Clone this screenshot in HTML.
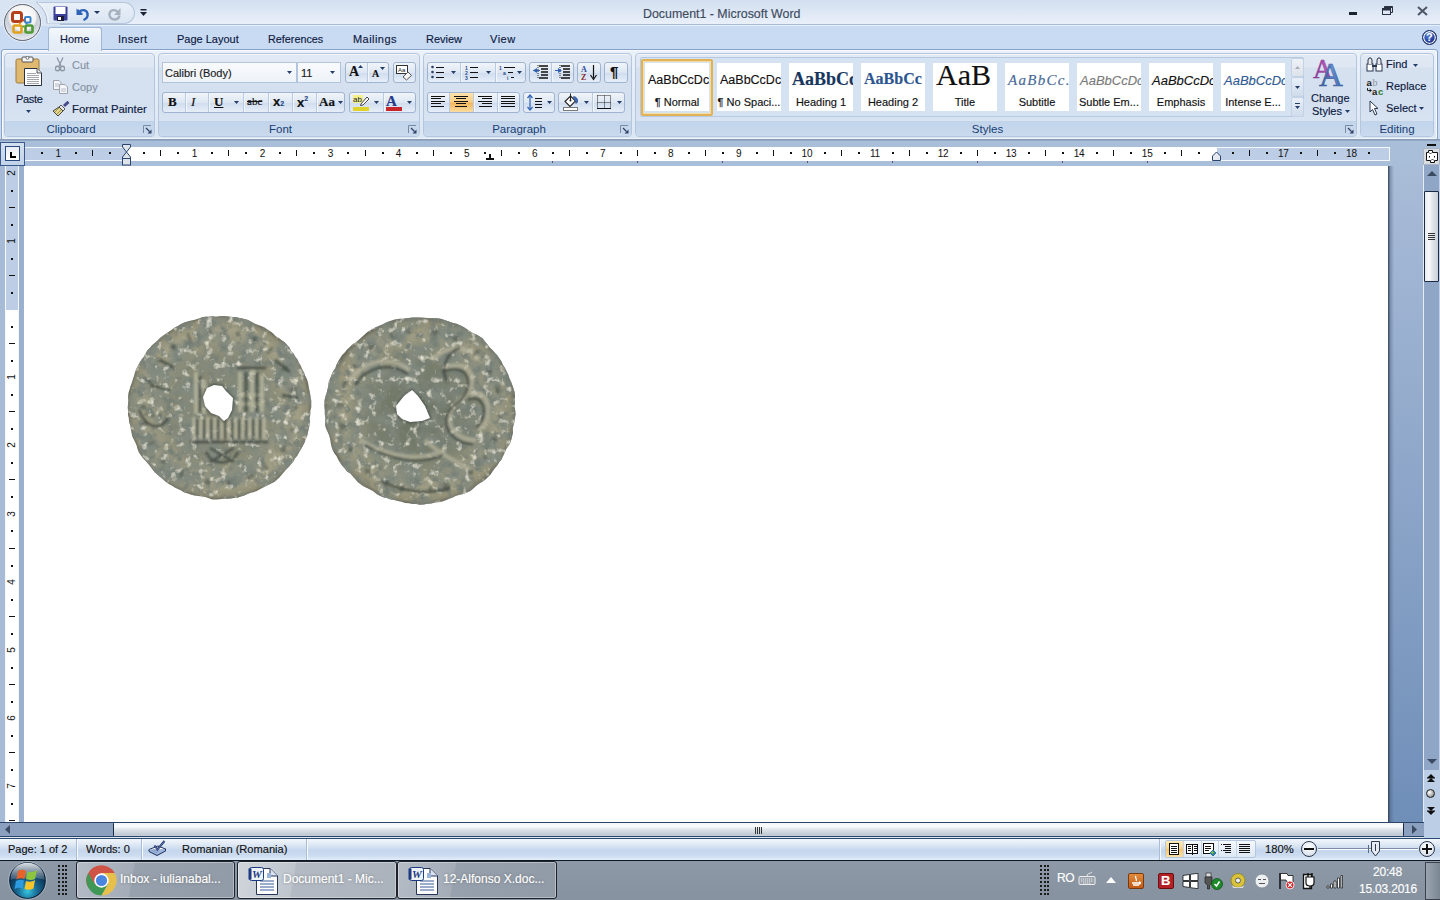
<!DOCTYPE html>
<html><head><meta charset="utf-8">
<style>
*{box-sizing:border-box}
html,body{margin:0;padding:0}
body{width:1440px;height:900px;position:relative;overflow:hidden;font-family:"Liberation Sans",sans-serif;background:#fff;color:#15428b}
.a{position:absolute}
.t{position:absolute;white-space:nowrap;line-height:1;-webkit-text-stroke:0.15px currentColor}
/* title bar */
#title{left:0;top:0;width:1440px;height:25px;background:linear-gradient(#d2dff0,#e9f0fa);border-bottom:1px solid #a7bcd6}
#tabs{left:0;top:25px;width:1440px;height:115px;background:#c9dbf2;border-top:1px solid #e8f1fb}
#ribbon{left:1px;top:49px;width:1437px;height:91px;background:linear-gradient(#eaf1f9,#dce7f4);border:1px solid #87a3c6;border-radius:3px 3px 2px 2px;box-shadow:inset 0 1px 0 #f6f9fd,inset 1px 0 0 #f6f9fd,inset -1px 0 0 #f6f9fd,inset 0 -1px 0 #eef4fb}
.grp{position:absolute;top:53px;height:84px;border:1px solid #b3c6de;border-radius:4px;background:linear-gradient(#e1e9f4 0%,#dee7f3 16%,#d5e1ef 17%,#d4e0ef 60%,#d8e4f2 82%);overflow:hidden;box-shadow:inset 0 1px 0 #f2f6fb}
.grp .lbl{position:absolute;left:0;right:0;bottom:0;height:15px;background:linear-gradient(#c2d4ea,#c9daee);text-align:center;font-size:11.5px;line-height:17px;color:#173d73;padding-right:17px}
.grp .lbl.nl{padding-right:0}
.launch{position:absolute;right:3px;bottom:3px;width:9px;height:9px}
#rulerrow{left:0;top:140px;width:1440px;height:26px;background:#a9bed9;border-top:1px solid #90a8c8}
#docarea{left:0;top:166px;width:1424px;height:656px;background:#a6bad7}
#page{left:24px;top:166px;width:1364px;height:656px;background:#fff}
#vscroll{left:1423px;top:165px;width:17px;height:657px;background:#c4d5ec}
#hscroll{left:0;top:822px;width:1424px;height:16px;background:#8aa0bf;border-top:1px solid #1f3a5f;border-bottom:1px solid #29466b}
#status{left:0;top:838px;width:1440px;height:23px;background:linear-gradient(#eef4fb 0%,#d6e3f3 35%,#c2d4eb 50%,#d3e2f3 85%,#e6f0fa 100%);border-top:1px solid #2b4a72;border-bottom:1px solid #0e1a2a}
#taskbar{left:0;top:861px;width:1440px;height:39px;background:#8894a2}
.btn{position:absolute;border:1px solid #9fb4d1;border-radius:3px;background:linear-gradient(#f1f5fa,#dde6f2 50%,#cfdcee 51%,#e6eef8)}
</style></head><body>
<div id="title" class="a"></div>
<div id="tabs" class="a"></div>
<div id="ribbon" class="a"></div>
<!--TOP-->
<!-- QAT pill -->
<div class="a" style="left:30px;top:2px;width:105px;height:22px;border:1px solid #b6c7dd;border-left:none;border-radius:0 11px 11px 0;background:linear-gradient(#eaf0f8,#dae5f2)"></div>
<svg class="a" style="left:0;top:0" width="60" height="26"><path d="M36 2.5A25 25 0 0 1 47 23.5H60V26H0V0H36Z" fill="#d9e4f2"/><path d="M36.5 2.5A25 25 0 0 1 47 23.5" fill="none" stroke="#a9b9cf" stroke-width="1"/><path d="M38 2.5A25 25 0 0 1 48.5 23" fill="none" stroke="#f4f8fc" stroke-width="1"/></svg>
<!-- Office button -->
<div class="a" style="left:4px;top:4px;width:37px;height:37px;border-radius:50%;background:radial-gradient(circle at 50% 35%,#ffffff 0%,#f3f3f3 45%,#c9ced6 52%,#e9edf2 80%,#b8bec7 100%);border:1px solid #5c6470;box-shadow:0 0 0 1px #e7edf5"></div>
<svg class="a" style="left:0px;top:0px" width="45" height="45" viewBox="0 0 45 45">
 <rect x="12.5" y="12.5" width="9" height="9" rx="2" fill="none" stroke="#b5401a" stroke-width="3"/>
 <rect x="25" y="17" width="5.5" height="5.5" rx="1" fill="none" stroke="#3d83c6" stroke-width="2"/>
 <rect x="13.5" y="25.5" width="8" height="7" rx="1.5" fill="none" stroke="#e3a21e" stroke-width="2.6"/>
 <rect x="25.5" y="25.5" width="7" height="7" rx="1.5" fill="none" stroke="#4d9a32" stroke-width="2.6"/>
 <circle cx="23.3" cy="20.2" r="1.2" fill="#c84a22"/><circle cx="20" cy="23.5" r="1.1" fill="#e0a020"/><circle cx="26.5" cy="23.5" r="1.1" fill="#3d83c6"/><circle cx="23.3" cy="26.5" r="1.1" fill="#5a9a30"/>
</svg>
<!-- save -->
<svg class="a" style="left:53px;top:6px" width="15" height="15" viewBox="0 0 15 15">
 <rect x="0.5" y="0.5" width="14" height="14" rx="1" fill="#3b3f9a"/>
 <rect x="2.5" y="1" width="10" height="7" fill="#fff"/>
 <rect x="4" y="10" width="7" height="5" fill="#1b1b3a"/><rect x="5" y="11" width="3" height="3" fill="#fff"/>
</svg>
<!-- undo -->
<svg class="a" style="left:75px;top:6px" width="15" height="15" viewBox="0 0 15 15">
 <path d="M3 3 L3 8 L8 8" fill="#2c62b8"/>
 <path d="M3.5 7 C6 3 12 3 12.5 8 C13 11 11 13 8.5 14" fill="none" stroke="#2c62b8" stroke-width="2.4"/>
 <path d="M1.5 2.5 L1.5 9 L8 9 Z" fill="#2c62b8"/>
</svg>
<svg class="a" style="left:94px;top:11px" width="6" height="4"><path d="M0 0H6L3 3Z" fill="#1d3664"/></svg>
<!-- redo grey -->
<svg class="a" style="left:107px;top:6px" width="15" height="15" viewBox="0 0 15 15">
 <path d="M11.5 7 C9 3 3 3 2.5 8 C2 11 4.5 13.5 7.5 13.5 C10 13.5 12 12 12.5 9.5" fill="none" stroke="#a6b1bf" stroke-width="2.4"/>
 <path d="M13.5 2 L13.5 9 L7 9 Z" fill="#a6b1bf"/>
</svg>
<!-- customize -->
<svg class="a" style="left:140px;top:9px" width="7" height="8"><rect x="0.5" y="0" width="6" height="1.5" fill="#1c2233"/><path d="M0 3H7L3.5 7Z" fill="#1c2233"/></svg>
<div class="t" style="left:643px;top:8px;font-size:12.4px;color:#3e4b5d">Document1 - Microsoft Word</div>
<!-- window controls -->
<div class="a" style="left:1349px;top:12px;width:8px;height:3px;background:#1d232d"></div>
<svg class="a" style="left:1382px;top:6px" width="11" height="9" viewBox="0 0 11 9"><rect x="0.5" y="2.5" width="8" height="6" fill="none" stroke="#2a3140" stroke-width="1"/><rect x="0.5" y="2.5" width="8" height="2" fill="#2a3140"/><path d="M2.5 2.5V0.5H10.5V6.5H8.5" fill="none" stroke="#2a3140"/><rect x="2.5" y="0.5" width="8" height="1.5" fill="#2a3140"/></svg>
<svg class="a" style="left:1417px;top:6px" width="11" height="10" viewBox="0 0 11 10"><path d="M1 1L10 9M10 1L1 9" stroke="#4e5666" stroke-width="2"/></svg>
<!-- tabs -->
<div class="a" style="left:48px;top:27px;width:54px;height:24px;border:1px solid #9fb6d4;border-bottom:none;border-radius:3px 3px 0 0;background:linear-gradient(#f4f8fc,#e6eef8 60%,#e3ebf6)"></div>
<div class="t" style="left:60px;top:34px;font-size:11px;color:#0e1a42">Home</div>
<div class="t" style="left:118px;top:34px;font-size:11px;letter-spacing:0.3px;color:#0e1a42">Insert</div>
<div class="t" style="left:177px;top:34px;font-size:11px;color:#0e1a42">Page Layout</div>
<div class="t" style="left:268px;top:34px;font-size:10.8px;color:#0e1a42">References</div>
<div class="t" style="left:353px;top:34px;font-size:11px;letter-spacing:0.45px;color:#0e1a42">Mailings</div>
<div class="t" style="left:426px;top:34px;font-size:11px;color:#0e1a42">Review</div>
<div class="t" style="left:490px;top:34px;font-size:11px;letter-spacing:0.5px;color:#0e1a42">View</div>
<!-- help -->
<div class="a" style="left:1422px;top:30px;width:15px;height:15px;border-radius:50%;background:radial-gradient(circle at 40% 30%,#5a82d8,#1a3590 65%,#0c1e60);border:1px solid #0f1f55;box-shadow:inset 0 0 0 1.3px #f4f7fb"></div>
<div class="t" style="left:1426px;top:32px;font-size:11px;font-weight:bold;color:#fff;-webkit-text-stroke:0">?</div>
<!--/TOP-->
<!--RIB--><div class="grp" style="left:4px;width:151px"><div class="lbl">Clipboard</div></div>
<svg class="a" style="left:143px;top:125px" width="9" height="9" viewBox="0 0 9 9"><path d="M0.5 8V0.5H8" fill="none" stroke="#7b8aa3"/><path d="M3 3L6.5 6.5" stroke="#2e4266" stroke-width="1.2"/><path d="M8.5 4.5V8.5H4.5Z" fill="#2e4266"/></svg>
<div class="grp" style="left:158px;width:262px"><div class="lbl">Font</div></div>
<svg class="a" style="left:408px;top:125px" width="9" height="9" viewBox="0 0 9 9"><path d="M0.5 8V0.5H8" fill="none" stroke="#7b8aa3"/><path d="M3 3L6.5 6.5" stroke="#2e4266" stroke-width="1.2"/><path d="M8.5 4.5V8.5H4.5Z" fill="#2e4266"/></svg>
<div class="grp" style="left:423px;width:209px"><div class="lbl">Paragraph</div></div>
<svg class="a" style="left:620px;top:125px" width="9" height="9" viewBox="0 0 9 9"><path d="M0.5 8V0.5H8" fill="none" stroke="#7b8aa3"/><path d="M3 3L6.5 6.5" stroke="#2e4266" stroke-width="1.2"/><path d="M8.5 4.5V8.5H4.5Z" fill="#2e4266"/></svg>
<div class="grp" style="left:635px;width:722px"><div class="lbl">Styles</div></div>
<svg class="a" style="left:1345px;top:125px" width="9" height="9" viewBox="0 0 9 9"><path d="M0.5 8V0.5H8" fill="none" stroke="#7b8aa3"/><path d="M3 3L6.5 6.5" stroke="#2e4266" stroke-width="1.2"/><path d="M8.5 4.5V8.5H4.5Z" fill="#2e4266"/></svg>
<div class="grp" style="left:1360px;width:74px"><div class="lbl nl">Editing</div></div>
<svg class="a" style="left:15px;top:56px" width="28" height="31" viewBox="0 0 28 31">
<rect x="1" y="3" width="23" height="24" rx="1.5" fill="#e0b971" stroke="#9c7a3e"/>
<rect x="7" y="1" width="11" height="5" rx="1" fill="#f4f4f4" stroke="#555"/>
<circle cx="12.5" cy="1.8" r="1.5" fill="#fff" stroke="#555" stroke-width="0.8"/>
<path d="M9.5 12.5H22L26.5 17V29.5H9.5Z" fill="#fff" stroke="#2c3340"/>
<path d="M22 12.5V17H26.5" fill="#e8e8e8" stroke="#2c3340" stroke-width="0.8"/>
<path d="M12 17.5H21M12 19.5H24M12 21.5H24M12 23.5H24M12 25.5H24M12 27.5H24" stroke="#8c8f96" stroke-width="0.8"/>
</svg>
<div class="t" style="left:16px;top:94px;font-size:11px;color:#0e1a42;letter-spacing:-0.3px">Paste</div>
<svg class="a" style="left:26px;top:110px" width="5" height="3"><path d="M0 0H5L2.5 3Z" fill="#243e6b"/></svg>
<svg class="a" style="left:55px;top:57px" width="10" height="15" viewBox="0 0 10 15"><path d="M2 0.5L6 9M8 0.5L4 9" stroke="#8e98a5" stroke-width="1.3"/><circle cx="2.5" cy="11.5" r="2.2" fill="none" stroke="#8e98a5" stroke-width="1.4"/><circle cx="7.5" cy="11.5" r="2.2" fill="none" stroke="#8e98a5" stroke-width="1.4"/></svg>
<div class="t" style="left:72px;top:60px;font-size:11px;color:#8592a3;">Cut</div>
<svg class="a" style="left:53px;top:80px" width="16" height="14" viewBox="0 0 16 14"><path d="M0.5 0.5H6L8 2.5V9.5H0.5Z" fill="#f4f6f9" stroke="#9aa3ae"/><path d="M6.5 4.5H12L14.5 7V13.5H6.5Z" fill="#f4f6f9" stroke="#9aa3ae"/><path d="M8 9H13M8 11H13M2 4H6M2 6H6" stroke="#a8b0ba" stroke-width="0.8"/></svg>
<div class="t" style="left:72px;top:82px;font-size:11px;color:#8592a3;">Copy</div>
<svg class="a" style="left:52px;top:101px" width="18" height="16" viewBox="0 0 18 16"><path d="M12 5L16.5 0.8" stroke="#4a4a8a" stroke-width="3"/><path d="M9 4L13 8L11 10L7 6Z" fill="#e8e8e8" stroke="#333" stroke-width=".8"/><path d="M7 6L11 10L6 15L1 10Z" fill="#e2d48a" stroke="#333" stroke-width=".9"/><path d="M3 11L7 7M5 13L9 9" stroke="#9a8a40" stroke-width=".8"/></svg>
<div class="t" style="left:72px;top:104px;font-size:11.3px;color:#0e1a42;">Format Painter</div>
<div class="a" style="left:162px;top:62px;width:135px;height:21px;border:1px solid #b3c5dc;background:linear-gradient(#f8fafd,#eef3f9)"></div>
<div class="t" style="left:165px;top:68px;font-size:11px;color:#1a1a1a;">Calibri (Body)</div>
<svg class="a" style="left:287px;top:71px" width="5" height="3"><path d="M0 0H5L2.5 3Z" fill="#243e6b"/></svg>
<div class="a" style="left:297px;top:62px;width:44px;height:21px;border:1px solid #b3c5dc;background:linear-gradient(#f8fafd,#eef3f9)"></div>
<div class="t" style="left:301px;top:68px;font-size:11px;color:#1a1a1a;">11</div>
<svg class="a" style="left:330px;top:71px" width="5" height="3"><path d="M0 0H5L2.5 3Z" fill="#243e6b"/></svg>
<div class="btn" style="left:345px;top:62px;width:44px;height:21px"></div>
<div class="a" style="left:367px;top:63px;width:1px;height:19px;background:#b9cbe2;box-shadow:1px 0 0 #f2f6fb"></div>
<div class="t" style="left:349px;top:65px;font-size:14px;font-family:'Liberation Serif';font-weight:bold;color:#111">A</div>
<svg class="a" style="left:358px;top:65px" width="5" height="3"><path d="M0 3H5L2.5 0Z" fill="#243e6b"/></svg>
<div class="t" style="left:372px;top:69px;font-size:10px;font-family:'Liberation Serif';font-weight:bold;color:#111">A</div>
<svg class="a" style="left:380px;top:67px" width="5" height="3"><path d="M0 0H5L2.5 3Z" fill="#243e6b"/></svg>
<div class="btn" style="left:393px;top:62px;width:23px;height:21px"></div>
<svg class="a" style="left:395px;top:64px" width="18" height="17" viewBox="0 0 18 17"><rect x="1.5" y="1.5" width="11" height="8" fill="#fff" stroke="#333"/><text x="3" y="8" font-size="6" font-family="Liberation Sans" fill="#222">A</text><text x="7" y="8" font-size="6" font-family="Liberation Sans" fill="#222">a</text><path d="M8 13L13 8L16.5 11.5L11.5 16Z" fill="#f4f4f4" stroke="#555"/></svg>
<div class="btn" style="left:162px;top:92px;width:183px;height:21px"></div>
<div class="a" style="left:185px;top:93px;width:1px;height:19px;background:#b9cbe2;box-shadow:1px 0 0 #f2f6fb"></div>
<div class="a" style="left:208px;top:93px;width:1px;height:19px;background:#b9cbe2;box-shadow:1px 0 0 #f2f6fb"></div>
<div class="a" style="left:243px;top:93px;width:1px;height:19px;background:#b9cbe2;box-shadow:1px 0 0 #f2f6fb"></div>
<div class="a" style="left:268px;top:93px;width:1px;height:19px;background:#b9cbe2;box-shadow:1px 0 0 #f2f6fb"></div>
<div class="a" style="left:292px;top:93px;width:1px;height:19px;background:#b9cbe2;box-shadow:1px 0 0 #f2f6fb"></div>
<div class="a" style="left:316px;top:93px;width:1px;height:19px;background:#b9cbe2;box-shadow:1px 0 0 #f2f6fb"></div>
<div class="t" style="left:168px;top:95px;font-size:13px;font-family:'Liberation Serif';font-weight:bold;color:#111">B</div>
<div class="t" style="left:191px;top:95px;font-size:13px;font-family:'Liberation Serif';font-style:italic;color:#111">I</div>
<div class="t" style="left:214px;top:95px;font-size:13px;font-family:'Liberation Serif';font-weight:bold;color:#111;text-decoration:underline">U</div>
<svg class="a" style="left:234px;top:101px" width="5" height="3"><path d="M0 0H5L2.5 3Z" fill="#243e6b"/></svg>
<div class="t" style="left:247px;top:96px;font-size:11px;font-family:'Liberation Serif';color:#111;text-decoration:line-through">abc</div>
<div class="t" style="left:273px;top:95px;font-size:13px;font-weight:bold;color:#111">x<span style="font-size:7px;color:#244a8a">2</span></div>
<div class="t" style="left:297px;top:95px;font-size:13px;font-weight:bold;color:#111">x<span style="font-size:7px;vertical-align:6px;color:#244a8a">2</span></div>
<div class="t" style="left:319px;top:95px;font-size:13px;font-family:'Liberation Serif';font-weight:bold;color:#111">Aa</div>
<svg class="a" style="left:338px;top:101px" width="5" height="3"><path d="M0 0H5L2.5 3Z" fill="#243e6b"/></svg>
<div class="btn" style="left:349px;top:92px;width:67px;height:21px"></div>
<div class="a" style="left:383px;top:93px;width:1px;height:19px;background:#b9cbe2;box-shadow:1px 0 0 #f2f6fb"></div>
<svg class="a" style="left:352px;top:93px" width="18" height="19" viewBox="0 0 18 19"><rect x="1" y="2" width="10" height="8" fill="#f5f08a"/><text x="1" y="9" font-size="8" font-family="Liberation Sans" fill="#222">ab</text><path d="M9 11L15 4L17 6L11 12L8.5 12.5Z" fill="#fff" stroke="#333" stroke-width="0.9"/><rect x="1" y="14" width="16" height="4" fill="#dfd22a"/></svg>
<svg class="a" style="left:374px;top:101px" width="5" height="3"><path d="M0 0H5L2.5 3Z" fill="#243e6b"/></svg>
<div class="t" style="left:386px;top:94px;font-size:15px;font-family:'Liberation Serif';font-weight:bold;color:#1f3a8a">A</div>
<div class="a" style="left:386px;top:107px;width:16px;height:4px;background:#c8252a"></div>
<svg class="a" style="left:407px;top:101px" width="5" height="3"><path d="M0 0H5L2.5 3Z" fill="#243e6b"/></svg>
<div class="btn" style="left:427px;top:62px;width:99px;height:21px"></div>
<div class="a" style="left:460px;top:63px;width:1px;height:19px;background:#b9cbe2;box-shadow:1px 0 0 #f2f6fb"></div>
<div class="a" style="left:495px;top:63px;width:1px;height:19px;background:#b9cbe2;box-shadow:1px 0 0 #f2f6fb"></div>
<svg class="a" style="left:431px;top:65px" width="14" height="14" viewBox="0 0 14 14"><circle cx="1.5" cy="2" r="1.3" fill="#2a3f66"/><circle cx="1.5" cy="7" r="1.3" fill="#2a3f66"/><circle cx="1.5" cy="12" r="1.3" fill="#2a3f66"/><path d="M5 2.5H13M5 7.5H13M5 12.5H13" stroke="#111" stroke-width="1"/></svg>
<svg class="a" style="left:451px;top:71px" width="5" height="3"><path d="M0 0H5L2.5 3Z" fill="#243e6b"/></svg>
<svg class="a" style="left:465px;top:65px" width="14" height="15" viewBox="0 0 14 15"><text x="0" y="5" font-size="5" font-weight="bold" fill="#2a4a8a" font-family="Liberation Sans">1</text><text x="0" y="10" font-size="5" font-weight="bold" fill="#2a4a8a" font-family="Liberation Sans">2</text><text x="0" y="15" font-size="5" font-weight="bold" fill="#2a4a8a" font-family="Liberation Sans">3</text><path d="M5 2.5H13M5 7.5H13M5 12.5H13" stroke="#111" stroke-width="1"/></svg>
<svg class="a" style="left:486px;top:71px" width="5" height="3"><path d="M0 0H5L2.5 3Z" fill="#243e6b"/></svg>
<svg class="a" style="left:499px;top:65px" width="18" height="15" viewBox="0 0 18 15"><text x="0" y="5" font-size="5" font-weight="bold" fill="#2a4a8a" font-family="Liberation Sans">1</text><text x="4" y="10" font-size="5" font-weight="bold" fill="#2a4a8a" font-family="Liberation Sans">a</text><text x="8" y="15" font-size="5" font-weight="bold" fill="#2a4a8a" font-family="Liberation Sans">i</text><path d="M5 2.5H16M9 7.5H14M12 12.5H15" stroke="#111" stroke-width="1"/></svg>
<svg class="a" style="left:517px;top:71px" width="5" height="3"><path d="M0 0H5L2.5 3Z" fill="#243e6b"/></svg>
<div class="btn" style="left:529px;top:62px;width:45px;height:21px"></div>
<div class="a" style="left:551px;top:63px;width:1px;height:19px;background:#b9cbe2;box-shadow:1px 0 0 #f2f6fb"></div>
<svg class="a" style="left:532px;top:64px" width="17" height="16" viewBox="0 0 17 16"><path d="M6 1V15" stroke="#222" stroke-dasharray="1 1"/><path d="M7 2H16M9 5H16M9 8H16M9 11H16M7 14H16" stroke="#111" stroke-width="1.3"/><path d="M1 6.5L5 4V9Z" fill="#2f62b4"/><path d="M1 6.5H8" stroke="#2f62b4"/></svg>
<svg class="a" style="left:554px;top:64px" width="17" height="16" viewBox="0 0 17 16"><path d="M6 1V15" stroke="#222" stroke-dasharray="1 1"/><path d="M7 2H16M9 5H16M9 8H16M9 11H16M7 14H16" stroke="#111" stroke-width="1.3"/><path d="M8 6.5L4 4V9Z" fill="#2f62b4"/><path d="M1 6.5H6" stroke="#2f62b4"/></svg>
<div class="btn" style="left:577px;top:62px;width:24px;height:21px"></div>
<svg class="a" style="left:581px;top:64px" width="17" height="17" viewBox="0 0 17 17"><text x="0" y="7.5" font-size="8" font-weight="bold" font-family="Liberation Serif" fill="#2a4a9a">A</text><text x="0" y="16" font-size="8" font-weight="bold" font-family="Liberation Serif" fill="#8a2a2a">Z</text><path d="M12.5 1V14" stroke="#111" stroke-width="1.2"/><path d="M9.5 11L12.5 15.5L15.5 11" fill="none" stroke="#111" stroke-width="1.2"/></svg>
<div class="btn" style="left:604px;top:62px;width:24px;height:21px"></div>
<div class="t" style="left:610px;top:64px;font-size:15px;font-weight:bold;color:#111">¶</div>
<div class="btn" style="left:427px;top:92px;width:93px;height:21px"></div>
<div class="a" style="left:449px;top:93px;width:1px;height:19px;background:#b9cbe2;box-shadow:1px 0 0 #f2f6fb"></div>
<div class="a" style="left:473px;top:93px;width:1px;height:19px;background:#b9cbe2;box-shadow:1px 0 0 #f2f6fb"></div>
<div class="a" style="left:497px;top:93px;width:1px;height:19px;background:#b9cbe2;box-shadow:1px 0 0 #f2f6fb"></div>
<div class="a" style="left:450px;top:93px;width:23px;height:19px;background:linear-gradient(#fde3ac,#f8cf88 45%,#f3b860 55%,#fbdca0);"></div>
<svg class="a" style="left:431px;top:96px" width="14" height="12" shape-rendering="crispEdges"><rect x="0" y="0" width="14" height="1" fill="#111"/><rect x="0" y="2" width="10" height="1" fill="#111"/><rect x="0" y="5" width="14" height="1" fill="#111"/><rect x="0" y="7" width="10" height="1" fill="#111"/><rect x="0" y="10" width="13" height="1" fill="#111"/></svg>
<svg class="a" style="left:454px;top:96px" width="14" height="12" shape-rendering="crispEdges"><rect x="0" y="0" width="14" height="1" fill="#111"/><rect x="2" y="2" width="10" height="1" fill="#111"/><rect x="0" y="5" width="14" height="1" fill="#111"/><rect x="2" y="7" width="10" height="1" fill="#111"/><rect x="1" y="10" width="12" height="1" fill="#111"/></svg>
<svg class="a" style="left:478px;top:96px" width="14" height="12" shape-rendering="crispEdges"><rect x="0" y="0" width="14" height="1" fill="#111"/><rect x="4" y="2" width="10" height="1" fill="#111"/><rect x="0" y="5" width="14" height="1" fill="#111"/><rect x="4" y="7" width="10" height="1" fill="#111"/><rect x="1" y="10" width="13" height="1" fill="#111"/></svg>
<svg class="a" style="left:501px;top:96px" width="14" height="12" shape-rendering="crispEdges"><rect x="0" y="0" width="14" height="1" fill="#111"/><rect x="0" y="2" width="14" height="1" fill="#111"/><rect x="0" y="5" width="14" height="1" fill="#111"/><rect x="0" y="7" width="14" height="1" fill="#111"/><rect x="0" y="10" width="14" height="1" fill="#111"/></svg>
<div class="btn" style="left:523px;top:92px;width:32px;height:21px"></div>
<svg class="a" style="left:527px;top:94px" width="20" height="17" viewBox="0 0 20 17"><path d="M3 1V16" stroke="#2f62b4" stroke-width="1.2"/><path d="M0.5 4L3 1L5.5 4M0.5 13L3 16L5.5 13" fill="none" stroke="#2f62b4" stroke-width="1.2"/><path d="M8 4.5H15M8 7.5H15M8 10.5H15M8 13.5H15" stroke="#111" stroke-width="1"/></svg>
<svg class="a" style="left:547px;top:101px" width="5" height="3"><path d="M0 0H5L2.5 3Z" fill="#243e6b"/></svg>
<div class="btn" style="left:558px;top:92px;width:67px;height:21px"></div>
<div class="a" style="left:592px;top:93px;width:1px;height:19px;background:#b9cbe2;box-shadow:1px 0 0 #f2f6fb"></div>
<svg class="a" style="left:562px;top:93px" width="18" height="18" viewBox="0 0 18 18"><path d="M3 8.5L8.5 3L13.5 8L8 13.5Z" fill="#fff" stroke="#222" stroke-width="1.1"/><path d="M8.5 0.5V7" stroke="#222"/><circle cx="8.5" cy="7.5" r="1" fill="#222"/><path d="M11 4C14 3 16 6 15.5 9L14 10.5L13.5 8" fill="#3a6ac0" stroke="#2a4a90" stroke-width=".8"/><rect x="1.5" y="14.5" width="14" height="3" fill="#fff" stroke="#7a7a7a"/></svg>
<svg class="a" style="left:584px;top:101px" width="5" height="3"><path d="M0 0H5L2.5 3Z" fill="#243e6b"/></svg>
<svg class="a" style="left:597px;top:95px" width="14" height="14" viewBox="0 0 14 14"><path d="M0.5 0.5H13.5V13M0.5 0.5V13M7.5 0.5V13M0.5 7.5H13.5" stroke="#222" stroke-dasharray="1 1" fill="none"/><path d="M0 13.5H14" stroke="#111" stroke-width="1"/></svg>
<svg class="a" style="left:617px;top:101px" width="5" height="3"><path d="M0 0H5L2.5 3Z" fill="#243e6b"/></svg>
<div class="a" style="left:640px;top:57px;width:664px;height:60px;border:1px solid #b7c9e1;border-radius:2px;background:#d5e2f2"></div>
<div class="a" style="left:645px;top:63px;width:64px;height:48px;background:#fff;overflow:hidden"><div class="t" style="left:3px;top:11.2px;font-size:12.5px;color:#111">AaBbCcDc</div><div class="t" style="left:0;right:0;top:34px;text-align:center;font-size:11px;color:#111">¶ Normal</div></div>
<div class="a" style="left:717px;top:63px;width:64px;height:48px;background:#fff;overflow:hidden"><div class="t" style="left:3px;top:11.2px;font-size:12.5px;color:#111">AaBbCcDc</div><div class="t" style="left:0;right:0;top:34px;text-align:center;font-size:11px;color:#111">¶ No Spaci...</div></div>
<div class="a" style="left:789px;top:63px;width:64px;height:48px;background:#fff;overflow:hidden"><div class="t" style="left:3px;top:6.7px;font-size:18px;font-family:'Liberation Serif';font-weight:bold;color:#17365d">AaBbCc</div><div class="t" style="left:0;right:0;top:34px;text-align:center;font-size:11px;color:#111">Heading 1</div></div>
<div class="a" style="left:861px;top:63px;width:64px;height:48px;background:#fff;overflow:hidden"><div class="t" style="left:3px;top:8.4px;font-size:16px;font-family:'Liberation Serif';font-weight:bold;color:#2c5590">AaBbCc</div><div class="t" style="left:0;right:0;top:34px;text-align:center;font-size:11px;color:#111">Heading 2</div></div>
<div class="a" style="left:933px;top:63px;width:64px;height:48px;background:#fff;overflow:hidden"><div class="t" style="left:3px;top:-3.3px;font-size:30px;font-family:'Liberation Serif';color:#111">AaB</div><div class="t" style="left:0;right:0;top:34px;text-align:center;font-size:11px;color:#111">Title</div></div>
<div class="a" style="left:1005px;top:63px;width:64px;height:48px;background:#fff;overflow:hidden"><div class="t" style="left:3px;top:9.9px;font-size:15px;font-family:'Liberation Serif';font-style:italic;color:#4a6a98;letter-spacing:1.3px">AaBbCc.</div><div class="t" style="left:0;right:0;top:34px;text-align:center;font-size:11px;color:#111">Subtitle</div></div>
<div class="a" style="left:1077px;top:63px;width:64px;height:48px;background:#fff;overflow:hidden"><div class="t" style="left:3px;top:10.8px;font-size:13px;font-style:italic;color:#7a7a7a">AaBbCcDc</div><div class="t" style="left:0;right:0;top:34px;text-align:center;font-size:11px;color:#111">Subtle Em...</div></div>
<div class="a" style="left:1149px;top:63px;width:64px;height:48px;background:#fff;overflow:hidden"><div class="t" style="left:3px;top:10.8px;font-size:13px;font-style:italic;color:#111">AaBbCcDc</div><div class="t" style="left:0;right:0;top:34px;text-align:center;font-size:11px;color:#111">Emphasis</div></div>
<div class="a" style="left:1221px;top:63px;width:64px;height:48px;background:#fff;overflow:hidden"><div class="t" style="left:3px;top:10.8px;font-size:13px;font-style:italic;color:#2f5a92">AaBbCcDc</div><div class="t" style="left:0;right:0;top:34px;text-align:center;font-size:11px;color:#111">Intense E...</div></div>
<div class="a" style="left:641px;top:59px;width:72px;height:57px;border:2px solid #e0b25a;border-radius:2px;box-shadow:inset 0 0 0 1px #f7dca0"></div>
<div class="a" style="left:1291px;top:58px;width:13px;height:19px;border:1px solid #c3d2e5;border-radius:2px;background:linear-gradient(#eef2f7,#dde3ea)"></div>
<svg class="a" style="left:1295px;top:66px" width="5" height="3"><path d="M0 3H5L2.5 0Z" fill="#a4adb8"/></svg>
<div class="a" style="left:1291px;top:77px;width:13px;height:20px;border:1px solid #c3d2e5;border-radius:2px;background:linear-gradient(#e8eff8,#cfdcec)"></div>
<svg class="a" style="left:1295px;top:86px" width="5" height="3"><path d="M0 0H5L2.5 3Z" fill="#243e6b"/></svg>
<div class="a" style="left:1291px;top:97px;width:13px;height:20px;border:1px solid #c3d2e5;border-radius:2px;background:linear-gradient(#e8eff8,#cfdcec)"></div>
<div class="a" style="left:1295px;top:103px;width:5px;height:1px;background:#243e6b"></div>
<svg class="a" style="left:1295px;top:106px" width="5" height="3"><path d="M0 0H5L2.5 3Z" fill="#243e6b"/></svg>
<svg class="a" style="left:1310px;top:55px" width="40" height="34" viewBox="0 0 40 34"><defs><linearGradient id="gpA" x1="0" x2="1"><stop offset="0" stop-color="#7a2a88"/><stop offset=".6" stop-color="#b35cb8"/><stop offset="1" stop-color="#8a3a98"/></linearGradient><linearGradient id="gbA" x1="0" x2="1"><stop offset="0" stop-color="#2e4f8e"/><stop offset=".55" stop-color="#6a8fd0"/><stop offset="1" stop-color="#3a5ea0"/></linearGradient></defs><text x="3" y="23" font-family="Liberation Serif" font-size="27" fill="url(#gpA)" stroke="#8a3a98" stroke-width=".5">A</text><text x="9" y="31" font-family="Liberation Serif" font-size="33" fill="url(#gbA)" stroke="#3a5ea0" stroke-width=".6">A</text></svg>
<div class="t" style="left:1311px;top:93px;font-size:11px;color:#0e1a42;">Change</div>
<div class="t" style="left:1312px;top:106px;font-size:11px;color:#0e1a42;">Styles</div>
<svg class="a" style="left:1345px;top:110px" width="5" height="3"><path d="M0 0H5L2.5 3Z" fill="#243e6b"/></svg>
<svg class="a" style="left:1366px;top:57px" width="17" height="15" viewBox="0 0 17 15"><rect x="1" y="7" width="6" height="7" fill="#fff" stroke="#2a3550"/><rect x="10" y="7" width="6" height="7" fill="#fff" stroke="#2a3550"/><path d="M2 7V3L3 1H5L6 3V7M11 7V3L12 1H14L15 3V7" fill="#e8e8e8" stroke="#2a3550"/><rect x="6" y="8" width="5" height="2" fill="#2a3550"/></svg>
<div class="t" style="left:1386px;top:59px;font-size:11px;color:#0e1a42;">Find</div>
<svg class="a" style="left:1413px;top:64px" width="5" height="3"><path d="M0 0H5L2.5 3Z" fill="#243e6b"/></svg>
<svg class="a" style="left:1366px;top:78px" width="19" height="18" viewBox="0 0 19 18"><text x="0.5" y="8" font-size="9.5" font-weight="bold" font-family="Liberation Sans" fill="#1a1a1a" style="-webkit-text-stroke:0">a</text><text x="6.5" y="8" font-size="10" font-family="Liberation Serif" fill="#8a8f98">b</text><text x="6" y="17" font-size="9.5" font-weight="bold" font-family="Liberation Sans" fill="#1a1a1a">a</text><text x="12" y="17" font-size="9.5" font-weight="bold" font-family="Liberation Sans" fill="#2f7a2a">c</text><path d="M1.5 10V12.5H5M3.5 11L5.5 12.5L3.5 14" fill="none" stroke="#222" stroke-width="1"/></svg>
<div class="t" style="left:1386px;top:81px;font-size:11px;color:#0e1a42;">Replace</div>
<svg class="a" style="left:1369px;top:100px" width="10" height="16" viewBox="0 0 10 16"><path d="M1 1V12L3.5 9.5L6 15L8 14L5.5 8.5H9Z" fill="#fff" stroke="#2a3550"/></svg>
<div class="t" style="left:1386px;top:103px;font-size:11px;color:#0e1a42;">Select</div>
<svg class="a" style="left:1419px;top:107px" width="5" height="3"><path d="M0 0H5L2.5 3Z" fill="#243e6b"/></svg><!--/RIB-->
<div id="rulerrow" class="a"></div>
<div id="docarea" class="a"></div>
<div id="page" class="a"></div>
<div id="vscroll" class="a"></div>
<div id="hscroll" class="a"></div>
<div id="status" class="a"></div>
<!--DOC--><div class="a" style="left:0;top:139px;width:1440px;height:1px;background:#8b9cb3"></div>
<div class="a" style="left:0;top:142px;width:25px;height:24px;border:1px solid #3a5a8c;background:linear-gradient(#d3e0f0,#c2d3ea)"></div>
<div class="a" style="left:5px;top:146px;width:15px;height:15px;border:1px solid #2b4b7e;background:linear-gradient(#e8eef6,#fff)"></div>
<div class="a" style="left:10px;top:152px;width:2px;height:6px;background:#000"></div><div class="a" style="left:10px;top:156px;width:6px;height:2px;background:#000"></div>
<div class="a" style="left:25px;top:147px;width:1365px;height:14px;background:#bccde5;border-top:1px solid #f4f8fc;border-bottom:1px solid #f4f8fc;border-right:1px solid #f4f8fc"></div>
<div class="a" style="left:126px;top:147px;width:1091px;height:14px;background:#fff"></div>
<div class="a" style="left:41px;top:152px;width:2px;height:2px;background:#111"></div>
<div class="t" style="left:48.2px;top:149px;width:20px;text-align:center;font-size:10px;color:#111;letter-spacing:-0.2px;-webkit-text-stroke:0">1</div>
<div class="a" style="left:75px;top:152px;width:2px;height:2px;background:#111"></div>
<div class="a" style="left:92px;top:150px;width:1px;height:6px;background:#111"></div>
<div class="a" style="left:109px;top:152px;width:2px;height:2px;background:#111"></div>
<div class="a" style="left:143px;top:152px;width:2px;height:2px;background:#111"></div>
<div class="a" style="left:160px;top:150px;width:1px;height:6px;background:#111"></div>
<div class="a" style="left:177px;top:152px;width:2px;height:2px;background:#111"></div>
<div class="t" style="left:184.4px;top:149px;width:20px;text-align:center;font-size:10px;color:#111;letter-spacing:-0.2px;-webkit-text-stroke:0">1</div>
<div class="a" style="left:211px;top:152px;width:2px;height:2px;background:#111"></div>
<div class="a" style="left:228px;top:150px;width:1px;height:6px;background:#111"></div>
<div class="a" style="left:245px;top:152px;width:2px;height:2px;background:#111"></div>
<div class="t" style="left:252.4px;top:149px;width:20px;text-align:center;font-size:10px;color:#111;letter-spacing:-0.2px;-webkit-text-stroke:0">2</div>
<div class="a" style="left:279px;top:152px;width:2px;height:2px;background:#111"></div>
<div class="a" style="left:296px;top:150px;width:1px;height:6px;background:#111"></div>
<div class="a" style="left:313px;top:152px;width:2px;height:2px;background:#111"></div>
<div class="t" style="left:320.5px;top:149px;width:20px;text-align:center;font-size:10px;color:#111;letter-spacing:-0.2px;-webkit-text-stroke:0">3</div>
<div class="a" style="left:347px;top:152px;width:2px;height:2px;background:#111"></div>
<div class="a" style="left:365px;top:150px;width:1px;height:6px;background:#111"></div>
<div class="a" style="left:382px;top:152px;width:2px;height:2px;background:#111"></div>
<div class="t" style="left:388.5px;top:149px;width:20px;text-align:center;font-size:10px;color:#111;letter-spacing:-0.2px;-webkit-text-stroke:0">4</div>
<div class="a" style="left:416px;top:152px;width:2px;height:2px;background:#111"></div>
<div class="a" style="left:433px;top:150px;width:1px;height:6px;background:#111"></div>
<div class="a" style="left:450px;top:152px;width:2px;height:2px;background:#111"></div>
<div class="t" style="left:456.6px;top:149px;width:20px;text-align:center;font-size:10px;color:#111;letter-spacing:-0.2px;-webkit-text-stroke:0">5</div>
<div class="a" style="left:484px;top:152px;width:2px;height:2px;background:#111"></div>
<div class="a" style="left:501px;top:150px;width:1px;height:6px;background:#111"></div>
<div class="a" style="left:518px;top:152px;width:2px;height:2px;background:#111"></div>
<div class="t" style="left:524.7px;top:149px;width:20px;text-align:center;font-size:10px;color:#111;letter-spacing:-0.2px;-webkit-text-stroke:0">6</div>
<div class="a" style="left:552px;top:152px;width:2px;height:2px;background:#111"></div>
<div class="a" style="left:569px;top:150px;width:1px;height:6px;background:#111"></div>
<div class="a" style="left:586px;top:152px;width:2px;height:2px;background:#111"></div>
<div class="t" style="left:592.7px;top:149px;width:20px;text-align:center;font-size:10px;color:#111;letter-spacing:-0.2px;-webkit-text-stroke:0">7</div>
<div class="a" style="left:620px;top:152px;width:2px;height:2px;background:#111"></div>
<div class="a" style="left:637px;top:150px;width:1px;height:6px;background:#111"></div>
<div class="a" style="left:654px;top:152px;width:2px;height:2px;background:#111"></div>
<div class="t" style="left:660.8px;top:149px;width:20px;text-align:center;font-size:10px;color:#111;letter-spacing:-0.2px;-webkit-text-stroke:0">8</div>
<div class="a" style="left:688px;top:152px;width:2px;height:2px;background:#111"></div>
<div class="a" style="left:705px;top:150px;width:1px;height:6px;background:#111"></div>
<div class="a" style="left:722px;top:152px;width:2px;height:2px;background:#111"></div>
<div class="t" style="left:728.8px;top:149px;width:20px;text-align:center;font-size:10px;color:#111;letter-spacing:-0.2px;-webkit-text-stroke:0">9</div>
<div class="a" style="left:756px;top:152px;width:2px;height:2px;background:#111"></div>
<div class="a" style="left:773px;top:150px;width:1px;height:6px;background:#111"></div>
<div class="a" style="left:790px;top:152px;width:2px;height:2px;background:#111"></div>
<div class="t" style="left:796.9px;top:149px;width:20px;text-align:center;font-size:10px;color:#111;letter-spacing:-0.2px;-webkit-text-stroke:0">10</div>
<div class="a" style="left:824px;top:152px;width:2px;height:2px;background:#111"></div>
<div class="a" style="left:841px;top:150px;width:1px;height:6px;background:#111"></div>
<div class="a" style="left:858px;top:152px;width:2px;height:2px;background:#111"></div>
<div class="t" style="left:865.0px;top:149px;width:20px;text-align:center;font-size:10px;color:#111;letter-spacing:-0.2px;-webkit-text-stroke:0">11</div>
<div class="a" style="left:892px;top:152px;width:2px;height:2px;background:#111"></div>
<div class="a" style="left:909px;top:150px;width:1px;height:6px;background:#111"></div>
<div class="a" style="left:926px;top:152px;width:2px;height:2px;background:#111"></div>
<div class="t" style="left:933.0px;top:149px;width:20px;text-align:center;font-size:10px;color:#111;letter-spacing:-0.2px;-webkit-text-stroke:0">12</div>
<div class="a" style="left:960px;top:152px;width:2px;height:2px;background:#111"></div>
<div class="a" style="left:977px;top:150px;width:1px;height:6px;background:#111"></div>
<div class="a" style="left:994px;top:152px;width:2px;height:2px;background:#111"></div>
<div class="t" style="left:1001.1px;top:149px;width:20px;text-align:center;font-size:10px;color:#111;letter-spacing:-0.2px;-webkit-text-stroke:0">13</div>
<div class="a" style="left:1028px;top:152px;width:2px;height:2px;background:#111"></div>
<div class="a" style="left:1045px;top:150px;width:1px;height:6px;background:#111"></div>
<div class="a" style="left:1062px;top:152px;width:2px;height:2px;background:#111"></div>
<div class="t" style="left:1069.1px;top:149px;width:20px;text-align:center;font-size:10px;color:#111;letter-spacing:-0.2px;-webkit-text-stroke:0">14</div>
<div class="a" style="left:1096px;top:152px;width:2px;height:2px;background:#111"></div>
<div class="a" style="left:1113px;top:150px;width:1px;height:6px;background:#111"></div>
<div class="a" style="left:1130px;top:152px;width:2px;height:2px;background:#111"></div>
<div class="t" style="left:1137.2px;top:149px;width:20px;text-align:center;font-size:10px;color:#111;letter-spacing:-0.2px;-webkit-text-stroke:0">15</div>
<div class="a" style="left:1164px;top:152px;width:2px;height:2px;background:#111"></div>
<div class="a" style="left:1181px;top:150px;width:1px;height:6px;background:#111"></div>
<div class="a" style="left:1198px;top:152px;width:2px;height:2px;background:#111"></div>
<div class="a" style="left:1232px;top:152px;width:2px;height:2px;background:#111"></div>
<div class="a" style="left:1249px;top:150px;width:1px;height:6px;background:#111"></div>
<div class="a" style="left:1266px;top:152px;width:2px;height:2px;background:#111"></div>
<div class="t" style="left:1273.3px;top:149px;width:20px;text-align:center;font-size:10px;color:#111;letter-spacing:-0.2px;-webkit-text-stroke:0">17</div>
<div class="a" style="left:1300px;top:152px;width:2px;height:2px;background:#111"></div>
<div class="a" style="left:1317px;top:150px;width:1px;height:6px;background:#111"></div>
<div class="a" style="left:1334px;top:152px;width:2px;height:2px;background:#111"></div>
<div class="t" style="left:1341.4px;top:149px;width:20px;text-align:center;font-size:10px;color:#111;letter-spacing:-0.2px;-webkit-text-stroke:0">18</div>
<div class="a" style="left:1368px;top:152px;width:2px;height:2px;background:#111"></div>
<div class="a" style="left:552px;top:161px;width:1px;height:2px;background:#556"></div>
<div class="a" style="left:637px;top:161px;width:1px;height:2px;background:#556"></div>
<div class="a" style="left:722px;top:161px;width:1px;height:2px;background:#556"></div>
<div class="a" style="left:807px;top:161px;width:1px;height:2px;background:#556"></div>
<div class="a" style="left:892px;top:161px;width:1px;height:2px;background:#556"></div>
<div class="a" style="left:977px;top:161px;width:1px;height:2px;background:#556"></div>
<div class="a" style="left:1062px;top:161px;width:1px;height:2px;background:#556"></div>
<div class="a" style="left:1147px;top:161px;width:1px;height:2px;background:#556"></div>
<svg class="a" style="left:121px;top:144px" width="11" height="22" viewBox="0 0 11 22"><path d="M1.5 0.5H9.5V3L5.5 8L1.5 3Z" fill="#dfe4ea" stroke="#2a4670"/><path d="M5.5 8L9.5 13V14.5H1.5V13Z" fill="#dfe4ea" stroke="#2a4670"/><rect x="1.5" y="14.5" width="8" height="6.5" fill="#dfe4ea" stroke="#2a4670"/></svg>
<div class="a" style="left:486px;top:158px;width:8px;height:2px;background:#111"></div><div class="a" style="left:489px;top:154px;width:2px;height:5px;background:#111"></div>
<svg class="a" style="left:1211px;top:151px" width="11" height="10" viewBox="0 0 11 10"><path d="M1.5 9.5V5L5.5 1L9.5 5V9.5Z" fill="#e6eaef" stroke="#2a4670"/></svg>
<div class="a" style="left:0;top:166px;width:24px;height:656px;background:#a7bad6"></div>
<div class="a" style="left:19px;top:166px;width:5px;height:656px;background:#9bb0cf"></div>
<div class="a" style="left:5px;top:166px;width:14px;height:144px;background:#bccde5;border-left:1px solid #f4f8fc;border-right:1px solid #f4f8fc"></div>
<div class="a" style="left:5px;top:310px;width:14px;height:512px;background:#fff;border-left:1px solid #f4f8fc;border-right:1px solid #f4f8fc"></div>
<div class="t" style="left:2px;top:168.2px;width:20px;height:10px;text-align:center;font-size:10px;line-height:10px;color:#111;-webkit-text-stroke:0;transform:rotate(-90deg)">2</div>
<div class="a" style="left:11px;top:190px;width:2px;height:2px;background:#111"></div>
<div class="a" style="left:9px;top:207px;width:6px;height:1px;background:#111"></div>
<div class="a" style="left:11px;top:224px;width:2px;height:2px;background:#111"></div>
<div class="t" style="left:2px;top:236.2px;width:20px;height:10px;text-align:center;font-size:10px;line-height:10px;color:#111;-webkit-text-stroke:0;transform:rotate(-90deg)">1</div>
<div class="a" style="left:11px;top:258px;width:2px;height:2px;background:#111"></div>
<div class="a" style="left:9px;top:275px;width:6px;height:1px;background:#111"></div>
<div class="a" style="left:11px;top:292px;width:2px;height:2px;background:#111"></div>
<div class="a" style="left:11px;top:326px;width:2px;height:2px;background:#111"></div>
<div class="a" style="left:9px;top:343px;width:6px;height:1px;background:#111"></div>
<div class="a" style="left:11px;top:360px;width:2px;height:2px;background:#111"></div>
<div class="t" style="left:2px;top:372.4px;width:20px;height:10px;text-align:center;font-size:10px;line-height:10px;color:#111;-webkit-text-stroke:0;transform:rotate(-90deg)">1</div>
<div class="a" style="left:11px;top:394px;width:2px;height:2px;background:#111"></div>
<div class="a" style="left:9px;top:411px;width:6px;height:1px;background:#111"></div>
<div class="a" style="left:11px;top:428px;width:2px;height:2px;background:#111"></div>
<div class="t" style="left:2px;top:440.4px;width:20px;height:10px;text-align:center;font-size:10px;line-height:10px;color:#111;-webkit-text-stroke:0;transform:rotate(-90deg)">2</div>
<div class="a" style="left:11px;top:462px;width:2px;height:2px;background:#111"></div>
<div class="a" style="left:9px;top:479px;width:6px;height:1px;background:#111"></div>
<div class="a" style="left:11px;top:496px;width:2px;height:2px;background:#111"></div>
<div class="t" style="left:2px;top:508.5px;width:20px;height:10px;text-align:center;font-size:10px;line-height:10px;color:#111;-webkit-text-stroke:0;transform:rotate(-90deg)">3</div>
<div class="a" style="left:11px;top:530px;width:2px;height:2px;background:#111"></div>
<div class="a" style="left:9px;top:548px;width:6px;height:1px;background:#111"></div>
<div class="a" style="left:11px;top:565px;width:2px;height:2px;background:#111"></div>
<div class="t" style="left:2px;top:576.5px;width:20px;height:10px;text-align:center;font-size:10px;line-height:10px;color:#111;-webkit-text-stroke:0;transform:rotate(-90deg)">4</div>
<div class="a" style="left:11px;top:599px;width:2px;height:2px;background:#111"></div>
<div class="a" style="left:9px;top:616px;width:6px;height:1px;background:#111"></div>
<div class="a" style="left:11px;top:633px;width:2px;height:2px;background:#111"></div>
<div class="t" style="left:2px;top:644.6px;width:20px;height:10px;text-align:center;font-size:10px;line-height:10px;color:#111;-webkit-text-stroke:0;transform:rotate(-90deg)">5</div>
<div class="a" style="left:11px;top:667px;width:2px;height:2px;background:#111"></div>
<div class="a" style="left:9px;top:684px;width:6px;height:1px;background:#111"></div>
<div class="a" style="left:11px;top:701px;width:2px;height:2px;background:#111"></div>
<div class="t" style="left:2px;top:712.7px;width:20px;height:10px;text-align:center;font-size:10px;line-height:10px;color:#111;-webkit-text-stroke:0;transform:rotate(-90deg)">6</div>
<div class="a" style="left:11px;top:735px;width:2px;height:2px;background:#111"></div>
<div class="a" style="left:9px;top:752px;width:6px;height:1px;background:#111"></div>
<div class="a" style="left:11px;top:769px;width:2px;height:2px;background:#111"></div>
<div class="t" style="left:2px;top:780.7px;width:20px;height:10px;text-align:center;font-size:10px;line-height:10px;color:#111;-webkit-text-stroke:0;transform:rotate(-90deg)">7</div>
<div class="a" style="left:11px;top:803px;width:2px;height:2px;background:#111"></div>
<div class="a" style="left:9px;top:820px;width:6px;height:1px;background:#111"></div>
<div class="a" style="left:1388px;top:166px;width:35px;height:656px;background:linear-gradient(#a9bcd8,#6f8eb8)"></div>
<div class="a" style="left:1388px;top:166px;width:6px;height:656px;background:linear-gradient(90deg,rgba(40,55,80,.9),rgba(60,80,110,.35) 40%,rgba(80,100,130,0))"></div>
<div class="a" style="left:1423px;top:165px;width:17px;height:673px;background:#c0d1e8;border-left:1px solid #e4ecf6"></div>
<div class="a" style="left:1427px;top:144px;width:9px;height:2px;background:#111"></div>
<div class="a" style="left:1423px;top:148px;width:17px;height:17px;background:#d9dde2;border:1px solid #aab4c2"></div>
<svg class="a" style="left:1425px;top:149px" width="14" height="14" viewBox="0 0 14 14"><path d="M1.5 3.5H3.5V1.5H7.5V3.5H12.5V11.5H9.5V13.5H5.5V11.5H1.5Z" fill="#fff" stroke="#111"/><path d="M4 3.5L5.5 5L7 3.5M6 11.5L7.5 10L9 11.5" fill="none" stroke="#111" stroke-width=".8"/><rect x="4" y="7" width="1" height="1.5" fill="#111"/><rect x="9" y="7" width="1" height="1.5" fill="#111"/></svg>
<div class="a" style="left:1424px;top:165px;width:15px;height:605px;background:#8fa6c6"></div>
<svg class="a" style="left:1427px;top:171px" width="10" height="5"><path d="M0 5H10L5 0Z" fill="#3b4a60"/></svg>
<div class="a" style="left:1424px;top:191px;width:15px;height:91px;border:1px solid #1b2b45;border-radius:1px;background:linear-gradient(90deg,#e9edf2,#f8f9fb 30%,#dfe4ea 60%,#c9d0d8)"></div>
<div class="a" style="left:1428px;top:233px;width:7px;height:1px;background:#333;box-shadow:0 2px 0 #333,0 4px 0 #333,0 6px 0 #333"></div>
<svg class="a" style="left:1427px;top:759px" width="10" height="5"><path d="M0 0H10L5 5Z" fill="#3b4a60"/></svg>
<div class="a" style="left:1424px;top:770px;width:16px;height:68px;background:#bccde6"></div>
<svg class="a" style="left:1426px;top:773px" width="10" height="10" viewBox="0 0 10 10"><path d="M1 5L5 1L9 5Z M1 9L5 5L9 9Z" fill="#111"/><rect x="1" y="4.5" width="8" height="1" fill="#111"/></svg>
<div class="a" style="left:1426px;top:789px;width:9px;height:9px;border-radius:50%;background:radial-gradient(circle at 35% 35%,#fff,#aaa 60%,#555);border:1px solid #222"></div>
<svg class="a" style="left:1426px;top:806px" width="10" height="10" viewBox="0 0 10 10"><path d="M1 1L5 5L9 1Z M1 5L5 9L9 5Z" fill="#111"/><rect x="1" y="4.5" width="8" height="1" fill="#111"/></svg>
<div class="a" style="left:0;top:822px;width:1424px;height:16px;background:#8aa0be;border-top:1px solid #2a4568;border-bottom:1px solid #dfe8f3"></div><div class="a" style="left:0;top:836px;width:1424px;height:1px;background:#2a4568"></div>
<svg class="a" style="left:5px;top:825px" width="5" height="9"><path d="M5 0V9L0 4.5Z" fill="#3b4a60"/></svg>
<div class="a" style="left:113px;top:823px;width:1291px;height:13px;border:1px solid #1b2b45;border-top:none;border-bottom:none;border-radius:1px;background:linear-gradient(#f2f4f7,#fbfcfd 25%,#dfe4ea 50%,#bfc8d2 92%,#cdd4dc)"></div>
<div class="a" style="left:755px;top:827px;width:1px;height:7px;background:#333;box-shadow:2px 0 0 #333,4px 0 0 #333,6px 0 0 #333"></div>
<svg class="a" style="left:1412px;top:825px" width="5" height="9"><path d="M0 0V9L5 4.5Z" fill="#3b4a60"/></svg>
<div class="a" style="left:0;top:838px;width:1440px;height:23px;background:linear-gradient(#f3f7fc 0%,#dbe6f4 30%,#c4d6ec 55%,#cddcf0 80%,#e4eefa 100%);border-top:1px solid #2b4a72;border-bottom:1px solid #0d1826"></div>
<div class="t" style="left:8px;top:844px;font-size:11px;color:#111;">Page: 1 of 2</div>
<div class="a" style="left:76px;top:839px;width:1px;height:21px;background:#a9bdd8;box-shadow:1px 0 0 #f6f9fd"></div>
<div class="t" style="left:86px;top:844px;font-size:11px;color:#111;">Words: 0</div>
<div class="a" style="left:141px;top:839px;width:1px;height:21px;background:#a9bdd8;box-shadow:1px 0 0 #f6f9fd"></div>
<svg class="a" style="left:148px;top:840px" width="19" height="17" viewBox="0 0 19 17"><path d="M1 9.5L9 13.5L17.5 9L10 6Z" fill="#fff" stroke="#1f2f5a" stroke-width="1"/><path d="M1 9.5V11.5L9 15.5L17.5 11V9" fill="#9db4dc" stroke="#1f2f5a" stroke-width="1"/><path d="M3 10L9 12.8M5 9L10.5 11.5" stroke="#7a90b8" stroke-width=".7"/><path d="M6.5 5.5L9.5 9.5L16.5 1" fill="none" stroke="#1f2f5a" stroke-width="2"/><path d="M6.5 5.5L9.5 9.5L16.5 1" fill="none" stroke="#6a8ad0" stroke-width=".8"/></svg>
<div class="t" style="left:182px;top:844px;font-size:11.1px;color:#111;">Romanian (Romania)</div>
<div class="a" style="left:306px;top:839px;width:1px;height:21px;background:#a9bdd8;box-shadow:1px 0 0 #f6f9fd"></div>
<div class="a" style="left:1159px;top:839px;width:1px;height:21px;background:#a9bdd8;box-shadow:1px 0 0 #f6f9fd"></div>
<div class="a" style="left:1165px;top:840px;width:91px;height:18px;border:1px solid #b5c7de;border-radius:2px;background:linear-gradient(#f4f8fc,#dde7f3)"></div>
<div class="a" style="left:1166px;top:841px;width:17px;height:16px;background:linear-gradient(#fde8b8,#f8d48a 50%,#f5c468 51%,#fbe0a8)"></div>
<div class="a" style="left:1183px;top:841px;width:1px;height:16px;background:#c6d4e6"></div>
<div class="a" style="left:1201px;top:841px;width:1px;height:16px;background:#c6d4e6"></div>
<div class="a" style="left:1218px;top:841px;width:1px;height:16px;background:#c6d4e6"></div>
<div class="a" style="left:1236px;top:841px;width:1px;height:16px;background:#c6d4e6"></div>
<svg class="a" style="left:1168px;top:843px" width="13" height="13" shape-rendering="crispEdges"><rect x="1" y="1" width="9" height="10" fill="#fff"/><rect x="1" y="0" width="10" height="1" fill="#111"/><rect x="1" y="11" width="10" height="1" fill="#111"/><rect x="1" y="0" width="1" height="12" fill="#111"/><rect x="10" y="0" width="1" height="12" fill="#111"/><rect x="3" y="3" width="6" height="1" fill="#111"/><rect x="3" y="5" width="6" height="1" fill="#111"/><rect x="3" y="7" width="6" height="1" fill="#111"/><rect x="3" y="9" width="6" height="1" fill="#111"/></svg>
<svg class="a" style="left:1186px;top:843px" width="13" height="13" shape-rendering="crispEdges"><rect x="1" y="2" width="10" height="8" fill="#fff"/><rect x="0" y="1" width="12" height="1" fill="#111"/><rect x="0" y="10" width="12" height="1" fill="#111"/><rect x="0" y="1" width="1" height="10" fill="#111"/><rect x="11" y="1" width="1" height="10" fill="#111"/><rect x="6" y="1" width="1" height="11" fill="#111"/><rect x="2" y="3" width="3" height="1" fill="#111"/><rect x="2" y="5" width="3" height="1" fill="#111"/><rect x="2" y="7" width="3" height="1" fill="#111"/><rect x="8" y="3" width="3" height="1" fill="#111"/><rect x="8" y="5" width="3" height="1" fill="#111"/><rect x="8" y="7" width="3" height="1" fill="#111"/></svg>
<svg class="a" style="left:1203px;top:843px" width="13" height="13" shape-rendering="crispEdges"><rect x="1" y="1" width="9" height="9" fill="#fff"/><rect x="0" y="0" width="11" height="1" fill="#111"/><rect x="0" y="10" width="11" height="1" fill="#111"/><rect x="0" y="0" width="1" height="11" fill="#111"/><rect x="10" y="0" width="1" height="8" fill="#111"/><rect x="2" y="3" width="6" height="1" fill="#111"/><rect x="2" y="5" width="6" height="1" fill="#111"/><rect x="2" y="7" width="4" height="1" fill="#111"/><circle cx="10" cy="10" r="2.6" fill="#2a7a9a"/><circle cx="9.5" cy="9.5" r="1.2" fill="#7ac04a"/></svg>
<svg class="a" style="left:1221px;top:843px" width="13" height="13" shape-rendering="crispEdges"><rect x="2" y="1" width="8" height="1" fill="#111"/><rect x="4" y="3" width="6" height="1" fill="#111"/><rect x="4" y="5" width="6" height="1" fill="#111"/><rect x="2" y="7" width="8" height="1" fill="#111"/><rect x="4" y="9" width="6" height="1" fill="#111"/><rect x="0" y="1" width="1" height="1" fill="#111"/><rect x="0" y="7" width="1" height="1" fill="#111"/></svg>
<svg class="a" style="left:1238px;top:843px" width="13" height="13" shape-rendering="crispEdges"><rect x="1" y="1" width="11" height="1" fill="#111"/><rect x="1" y="3" width="11" height="1" fill="#111"/><rect x="1" y="5" width="11" height="1" fill="#111"/><rect x="1" y="7" width="11" height="1" fill="#111"/><rect x="1" y="9" width="11" height="1" fill="#111"/></svg>
<div class="t" style="left:1265px;top:844px;font-size:11.2px;color:#111;">180%</div>
<div class="a" style="left:1301px;top:841px;width:16px;height:16px;border-radius:50%;border:1px solid #2d3a52;background:radial-gradient(circle at 50% 35%,#fff,#dfe5ee 70%,#b5c2d4)"></div>
<div class="a" style="left:1304px;top:848px;width:10px;height:2px;background:#111"></div>
<div class="a" style="left:1318px;top:848px;width:100px;height:1px;background:#7a8ca8;box-shadow:0 1px 0 #fff"></div>
<div class="a" style="left:1368px;top:845px;width:1px;height:8px;background:#5a6b85"></div>
<svg class="a" style="left:1370px;top:841px" width="11" height="16" viewBox="0 0 11 16"><path d="M1.5 0.5H9.5V10L5.5 15L1.5 10Z" fill="#e6ebf2" stroke="#2d3a52"/><path d="M5.5 3V10" stroke="#2d3a52"/></svg>
<div class="a" style="left:1419px;top:841px;width:16px;height:16px;border-radius:50%;border:1px solid #2d3a52;background:radial-gradient(circle at 50% 35%,#fff,#dfe5ee 70%,#b5c2d4)"></div>
<div class="a" style="left:1422px;top:848px;width:10px;height:2px;background:#111"></div><div class="a" style="left:1426px;top:844px;width:2px;height:10px;background:#111"></div><!--/DOC-->
<!--COINS--><svg class="a" style="left:120px;top:305px" width="405" height="210" viewBox="0 0 405 210">
<defs>
<filter id="noise" x="0" y="0" width="100%" height="100%">
 <feTurbulence type="fractalNoise" baseFrequency="0.05" numOctaves="3" seed="4" result="n"/>
 <feColorMatrix in="n" type="matrix" values="0 0 0 0 0.22  0 0 0 0 0.25  0 0 0 0 0.21  0 0 0 -3.0 1.95" result="dark"/>
 <feTurbulence type="fractalNoise" baseFrequency="0.14" numOctaves="3" seed="9" result="n2"/>
 <feColorMatrix in="n2" type="matrix" values="0 0 0 0 0.80  0 0 0 0 0.79  0 0 0 0 0.68  0 0 0 3.0 -1.72" result="light"/>
 <feTurbulence type="fractalNoise" baseFrequency="0.11" numOctaves="3" seed="21" result="n3"/>
 <feColorMatrix in="n3" type="matrix" values="0 0 0 0 0.18  0 0 0 0 0.21  0 0 0 0 0.18  0 0 0 -3.4 1.75" result="dark2"/>
 <feMerge><feMergeNode in="dark"/><feMergeNode in="dark2"/><feMergeNode in="light"/></feMerge>
 <feComposite in2="SourceGraphic" operator="in"/>
</filter>
<filter id="bl"><feGaussianBlur stdDeviation="1.1"/></filter>
<radialGradient id="cg1" cx="50%" cy="50%" r="50%"><stop offset="0" stop-color="#848672"/><stop offset=".55" stop-color="#888a76"/><stop offset=".86" stop-color="#a29f86"/><stop offset=".96" stop-color="#908d76"/><stop offset="1" stop-color="#6a695a"/></radialGradient>
<radialGradient id="cg2" cx="50%" cy="50%" r="50%"><stop offset="0" stop-color="#687062"/><stop offset=".5" stop-color="#787e6c"/><stop offset=".82" stop-color="#a09d84"/><stop offset=".95" stop-color="#928f76"/><stop offset="1" stop-color="#66655a"/></radialGradient>
<mask id="m1"><rect width="405" height="210" fill="#fff"/><path d="M87.0 83.0 L94.0 80.0 L102.0 81.0 L106.0 86.0 L113.0 93.0 L112.0 105.0 L108.0 113.0 L104.0 116.0 L99.0 111.0 L91.0 108.0 L85.0 101.0 L83.0 92.0Z" fill="#000"/><path d="M276.0 101.0 L284.0 91.0 L292.0 85.0 L298.0 91.0 L305.0 101.0 L310.0 113.0 L302.0 116.0 L290.0 117.0 L282.0 114.0 L277.0 109.0Z" fill="#000"/></mask>
</defs>
<g mask="url(#m1)">
<path d="M191.2 102.5 L190.3 106.1 L190.3 109.6 L189.5 113.2 L189.8 116.8 L189.5 120.4 L188.6 123.9 L187.9 127.4 L187.1 130.9 L185.6 134.3 L184.5 137.7 L182.7 140.9 L181.1 144.1 L179.2 147.1 L177.5 150.3 L175.3 153.1 L173.5 156.2 L171.1 159.0 L168.9 161.8 L166.3 164.2 L164.0 167.0 L161.7 169.8 L159.3 172.6 L156.6 174.9 L153.8 177.2 L150.5 178.8 L147.3 180.4 L144.0 182.0 L140.9 183.7 L137.7 185.4 L134.6 187.1 L131.0 187.8 L127.6 189.1 L124.3 190.4 L120.9 191.6 L117.4 192.7 L113.8 193.1 L110.3 193.5 L106.7 193.7 L103.1 193.7 L99.5 194.3 L95.9 194.5 L92.3 194.4 L88.8 193.2 L85.3 192.1 L81.8 191.5 L78.3 191.0 L74.7 190.4 L71.2 189.7 L67.8 188.5 L64.3 187.5 L61.3 185.4 L58.0 184.0 L54.8 182.4 L51.7 180.5 L48.5 178.8 L45.6 176.7 L43.0 174.2 L40.1 172.0 L37.4 169.6 L34.7 167.3 L32.6 164.4 L30.3 161.6 L28.1 158.8 L25.7 156.1 L23.3 153.4 L21.0 150.6 L19.0 147.6 L17.6 144.2 L16.7 140.7 L15.3 137.4 L13.7 134.2 L12.2 130.9 L11.5 127.3 L10.7 123.8 L10.2 120.3 L9.1 116.8 L8.8 113.2 L8.0 109.7 L8.0 106.1 L7.8 102.5 L8.0 98.9 L8.4 95.3 L8.0 91.7 L8.5 88.1 L9.6 84.6 L10.6 81.1 L11.8 77.8 L12.9 74.3 L14.0 71.0 L15.0 67.5 L16.2 64.1 L17.8 60.9 L19.5 57.7 L21.5 54.7 L23.7 51.9 L25.5 48.7 L27.3 45.6 L29.8 42.9 L32.1 40.2 L34.9 37.9 L37.6 35.5 L40.0 32.9 L42.9 30.7 L45.9 28.7 L48.8 26.7 L51.8 24.7 L54.7 22.5 L58.0 21.1 L61.0 19.1 L64.3 17.5 L67.8 16.6 L71.2 15.5 L74.8 14.8 L78.2 13.7 L81.6 12.4 L85.1 11.7 L88.8 11.7 L92.3 11.3 L95.9 11.7 L99.5 11.2 L103.1 11.0 L106.7 11.2 L110.2 11.8 L113.8 12.0 L117.4 12.4 L120.9 13.2 L124.4 14.1 L127.9 15.1 L131.2 16.7 L134.3 18.6 L137.6 19.8 L141.1 20.9 L144.3 22.5 L147.3 24.5 L150.4 26.3 L153.2 28.5 L155.7 31.2 L158.9 33.0 L161.7 35.2 L164.7 37.3 L167.1 40.1 L169.5 42.7 L171.1 46.0 L173.6 48.7 L175.3 51.8 L177.6 54.7 L179.2 57.9 L180.9 61.0 L182.2 64.4 L184.0 67.5 L185.2 70.9 L186.9 74.1 L188.0 77.5 L188.6 81.1 L189.2 84.7 L190.0 88.2 L190.5 91.7 L191.2 95.3 L191.2 98.9Z" fill="url(#cg1)"/>
<path d="M395.2 105.5 L395.7 109.2 L395.0 112.8 L394.6 116.5 L393.5 120.0 L392.8 123.6 L393.0 127.4 L392.2 131.0 L391.3 134.6 L390.3 138.1 L388.3 141.3 L386.1 144.3 L384.8 147.8 L383.1 151.1 L381.5 154.4 L379.2 157.3 L377.3 160.5 L374.8 163.2 L372.7 166.3 L370.6 169.4 L368.0 172.1 L365.3 174.7 L362.2 176.8 L359.0 178.8 L356.0 181.0 L353.3 183.5 L350.4 186.0 L346.9 187.4 L343.4 189.0 L339.6 189.7 L336.1 190.7 L332.7 192.4 L329.3 193.8 L325.8 195.2 L322.3 196.4 L318.6 197.2 L314.9 197.4 L311.3 198.6 L307.5 198.7 L303.8 199.6 L300.0 199.7 L296.2 199.0 L292.5 199.0 L288.8 198.3 L285.1 197.9 L281.4 196.8 L277.8 195.9 L274.2 195.0 L270.5 194.5 L267.0 193.1 L263.3 192.3 L259.8 190.8 L256.6 188.9 L253.6 186.5 L250.4 184.7 L247.0 183.1 L243.6 181.6 L240.7 179.2 L237.7 176.9 L235.2 174.1 L232.7 171.3 L230.4 168.5 L227.1 166.4 L224.8 163.6 L222.3 160.8 L220.1 157.7 L218.2 154.6 L216.6 151.2 L214.3 148.3 L212.7 144.9 L211.5 141.4 L210.7 137.7 L210.1 134.1 L209.2 130.6 L207.8 127.2 L206.2 123.8 L205.1 120.2 L205.3 116.5 L205.5 112.8 L204.8 109.2 L204.8 105.5 L204.4 101.8 L204.4 98.1 L204.7 94.5 L205.6 90.9 L206.8 87.4 L207.7 83.8 L208.5 80.2 L208.8 76.5 L210.4 73.1 L211.6 69.7 L213.2 66.3 L215.3 63.2 L216.5 59.7 L218.1 56.4 L220.1 53.2 L222.2 50.1 L224.8 47.5 L227.1 44.6 L229.9 42.1 L232.4 39.3 L235.6 37.4 L238.6 35.1 L241.3 32.6 L244.1 30.1 L246.8 27.5 L249.9 25.4 L253.1 23.5 L256.5 21.9 L260.0 20.6 L263.4 19.1 L266.8 17.3 L270.3 15.9 L273.9 14.8 L277.6 14.0 L281.4 13.8 L285.1 13.5 L288.8 13.0 L292.5 12.5 L296.3 12.4 L300.0 12.6 L303.7 12.7 L307.4 13.0 L311.2 13.2 L315.0 12.9 L318.7 13.2 L322.4 14.2 L325.9 15.5 L329.5 16.7 L333.0 18.0 L336.7 18.8 L340.1 20.3 L343.5 21.9 L346.7 23.9 L349.7 26.1 L352.8 28.1 L356.4 29.4 L359.7 31.4 L362.7 33.6 L365.0 36.6 L367.5 39.4 L369.7 42.4 L372.4 45.0 L374.8 47.7 L377.4 50.4 L379.5 53.5 L381.5 56.6 L383.0 60.0 L385.0 63.1 L386.7 66.4 L388.3 69.7 L389.4 73.2 L391.0 76.6 L392.3 80.0 L393.5 83.5 L394.6 87.1 L395.0 90.8 L394.9 94.5 L394.9 98.2 L394.9 101.9Z" fill="url(#cg2)"/>

<path d="M191.2 102.5 L190.3 106.1 L190.3 109.6 L189.5 113.2 L189.8 116.8 L189.5 120.4 L188.6 123.9 L187.9 127.4 L187.1 130.9 L185.6 134.3 L184.5 137.7 L182.7 140.9 L181.1 144.1 L179.2 147.1 L177.5 150.3 L175.3 153.1 L173.5 156.2 L171.1 159.0 L168.9 161.8 L166.3 164.2 L164.0 167.0 L161.7 169.8 L159.3 172.6 L156.6 174.9 L153.8 177.2 L150.5 178.8 L147.3 180.4 L144.0 182.0 L140.9 183.7 L137.7 185.4 L134.6 187.1 L131.0 187.8 L127.6 189.1 L124.3 190.4 L120.9 191.6 L117.4 192.7 L113.8 193.1 L110.3 193.5 L106.7 193.7 L103.1 193.7 L99.5 194.3 L95.9 194.5 L92.3 194.4 L88.8 193.2 L85.3 192.1 L81.8 191.5 L78.3 191.0 L74.7 190.4 L71.2 189.7 L67.8 188.5 L64.3 187.5 L61.3 185.4 L58.0 184.0 L54.8 182.4 L51.7 180.5 L48.5 178.8 L45.6 176.7 L43.0 174.2 L40.1 172.0 L37.4 169.6 L34.7 167.3 L32.6 164.4 L30.3 161.6 L28.1 158.8 L25.7 156.1 L23.3 153.4 L21.0 150.6 L19.0 147.6 L17.6 144.2 L16.7 140.7 L15.3 137.4 L13.7 134.2 L12.2 130.9 L11.5 127.3 L10.7 123.8 L10.2 120.3 L9.1 116.8 L8.8 113.2 L8.0 109.7 L8.0 106.1 L7.8 102.5 L8.0 98.9 L8.4 95.3 L8.0 91.7 L8.5 88.1 L9.6 84.6 L10.6 81.1 L11.8 77.8 L12.9 74.3 L14.0 71.0 L15.0 67.5 L16.2 64.1 L17.8 60.9 L19.5 57.7 L21.5 54.7 L23.7 51.9 L25.5 48.7 L27.3 45.6 L29.8 42.9 L32.1 40.2 L34.9 37.9 L37.6 35.5 L40.0 32.9 L42.9 30.7 L45.9 28.7 L48.8 26.7 L51.8 24.7 L54.7 22.5 L58.0 21.1 L61.0 19.1 L64.3 17.5 L67.8 16.6 L71.2 15.5 L74.8 14.8 L78.2 13.7 L81.6 12.4 L85.1 11.7 L88.8 11.7 L92.3 11.3 L95.9 11.7 L99.5 11.2 L103.1 11.0 L106.7 11.2 L110.2 11.8 L113.8 12.0 L117.4 12.4 L120.9 13.2 L124.4 14.1 L127.9 15.1 L131.2 16.7 L134.3 18.6 L137.6 19.8 L141.1 20.9 L144.3 22.5 L147.3 24.5 L150.4 26.3 L153.2 28.5 L155.7 31.2 L158.9 33.0 L161.7 35.2 L164.7 37.3 L167.1 40.1 L169.5 42.7 L171.1 46.0 L173.6 48.7 L175.3 51.8 L177.6 54.7 L179.2 57.9 L180.9 61.0 L182.2 64.4 L184.0 67.5 L185.2 70.9 L186.9 74.1 L188.0 77.5 L188.6 81.1 L189.2 84.7 L190.0 88.2 L190.5 91.7 L191.2 95.3 L191.2 98.9Z" fill="#000" filter="url(#noise)"/>
<path d="M395.2 105.5 L395.7 109.2 L395.0 112.8 L394.6 116.5 L393.5 120.0 L392.8 123.6 L393.0 127.4 L392.2 131.0 L391.3 134.6 L390.3 138.1 L388.3 141.3 L386.1 144.3 L384.8 147.8 L383.1 151.1 L381.5 154.4 L379.2 157.3 L377.3 160.5 L374.8 163.2 L372.7 166.3 L370.6 169.4 L368.0 172.1 L365.3 174.7 L362.2 176.8 L359.0 178.8 L356.0 181.0 L353.3 183.5 L350.4 186.0 L346.9 187.4 L343.4 189.0 L339.6 189.7 L336.1 190.7 L332.7 192.4 L329.3 193.8 L325.8 195.2 L322.3 196.4 L318.6 197.2 L314.9 197.4 L311.3 198.6 L307.5 198.7 L303.8 199.6 L300.0 199.7 L296.2 199.0 L292.5 199.0 L288.8 198.3 L285.1 197.9 L281.4 196.8 L277.8 195.9 L274.2 195.0 L270.5 194.5 L267.0 193.1 L263.3 192.3 L259.8 190.8 L256.6 188.9 L253.6 186.5 L250.4 184.7 L247.0 183.1 L243.6 181.6 L240.7 179.2 L237.7 176.9 L235.2 174.1 L232.7 171.3 L230.4 168.5 L227.1 166.4 L224.8 163.6 L222.3 160.8 L220.1 157.7 L218.2 154.6 L216.6 151.2 L214.3 148.3 L212.7 144.9 L211.5 141.4 L210.7 137.7 L210.1 134.1 L209.2 130.6 L207.8 127.2 L206.2 123.8 L205.1 120.2 L205.3 116.5 L205.5 112.8 L204.8 109.2 L204.8 105.5 L204.4 101.8 L204.4 98.1 L204.7 94.5 L205.6 90.9 L206.8 87.4 L207.7 83.8 L208.5 80.2 L208.8 76.5 L210.4 73.1 L211.6 69.7 L213.2 66.3 L215.3 63.2 L216.5 59.7 L218.1 56.4 L220.1 53.2 L222.2 50.1 L224.8 47.5 L227.1 44.6 L229.9 42.1 L232.4 39.3 L235.6 37.4 L238.6 35.1 L241.3 32.6 L244.1 30.1 L246.8 27.5 L249.9 25.4 L253.1 23.5 L256.5 21.9 L260.0 20.6 L263.4 19.1 L266.8 17.3 L270.3 15.9 L273.9 14.8 L277.6 14.0 L281.4 13.8 L285.1 13.5 L288.8 13.0 L292.5 12.5 L296.3 12.4 L300.0 12.6 L303.7 12.7 L307.4 13.0 L311.2 13.2 L315.0 12.9 L318.7 13.2 L322.4 14.2 L325.9 15.5 L329.5 16.7 L333.0 18.0 L336.7 18.8 L340.1 20.3 L343.5 21.9 L346.7 23.9 L349.7 26.1 L352.8 28.1 L356.4 29.4 L359.7 31.4 L362.7 33.6 L365.0 36.6 L367.5 39.4 L369.7 42.4 L372.4 45.0 L374.8 47.7 L377.4 50.4 L379.5 53.5 L381.5 56.6 L383.0 60.0 L385.0 63.1 L386.7 66.4 L388.3 69.7 L389.4 73.2 L391.0 76.6 L392.3 80.0 L393.5 83.5 L394.6 87.1 L395.0 90.8 L394.9 94.5 L394.9 98.2 L394.9 101.9Z" fill="#000" filter="url(#noise)"/>
<g fill="none" filter="url(#bl)">
 <path d="M74.0 112.0 L74.0 134.0 M81.0 112.0 L81.0 134.0 M88.0 112.0 L88.0 134.0 M95.0 112.0 L95.0 134.0 M102.0 112.0 L102.0 134.0 M109.0 112.0 L109.0 134.0 M116.0 112.0 L116.0 134.0 M123.0 112.0 L123.0 134.0 M130.0 112.0 L130.0 134.0 M137.0 112.0 L137.0 134.0 M144.0 112.0 L144.0 134.0 M120.0 67.0 L120.0 107.0 M132.0 65.0 L132.0 107.0 M142.0 70.0 L142.0 107.0 M118.0 90.0 L144.0 90.0 M118.0 99.0 L144.0 99.0 M76.0 67.0 L76.0 109.0 M84.0 75.0 L84.0 109.0 " stroke="#bdbba2" stroke-width="3.5" opacity=".8"/>
 <path d="M70.0 137.0 L148.0 137.0 M77.0 114.0 L77.0 134.0 M84.0 114.0 L84.0 134.0 M91.0 114.0 L91.0 134.0 M98.0 114.0 L98.0 134.0 M105.0 114.0 L105.0 134.0 M112.0 114.0 L112.0 134.0 M119.0 114.0 L119.0 134.0 M126.0 114.0 L126.0 134.0 M133.0 114.0 L133.0 134.0 M140.0 114.0 L140.0 134.0 M126.0 67.0 L126.0 107.0 M137.0 67.0 L137.0 107.0 M117.0 63.0 L146.0 63.0 M80.0 71.0 L80.0 109.0 M19.0 105.0 C26.0 123.0 40.0 127.0 48.0 113.0 M25.0 109.0 L27.0 109.0 M32.0 111.0 L34.0 111.0 M39.0 110.0 L41.0 110.0 M86.0 147.0 C92.0 161.0 112.0 161.0 118.0 147.0 M90.0 157.0 L114.0 143.0 M90.0 143.0 L114.0 157.0 M40.0 55.0 L55.0 63.0 M30.0 80.0 L50.0 85.0 M155.0 55.0 L170.0 67.0 M162.0 90.0 L178.0 93.0 " stroke="#3a423a" stroke-width="2.6" opacity=".75"/>
 <path d="M325.0 63.0 C352.0 51.0 362.0 81.0 340.0 95.0 C320.0 109.0 330.0 135.0 356.0 135.0 M312.0 55.0 C325.0 40.0 350.0 40.0 358.0 55.0 M350.0 90.0 C370.0 80.0 375.0 115.0 358.0 125.0 M240.0 135.0 C270.0 153.0 300.0 157.0 325.0 145.0 M230.0 75.0 C245.0 55.0 270.0 50.0 290.0 65.0 M305.0 135.0 C320.0 150.0 335.0 155.0 350.0 165.0 " stroke="#b6b49c" stroke-width="4.5" opacity=".7"/>
 <path d="M322.0 67.0 C348.0 55.0 358.0 83.0 337.0 98.0 C317.0 112.0 327.0 138.0 353.0 139.0 M340.0 43.0 C325.0 47.0 320.0 67.0 328.0 77.0 M348.0 95.0 C365.0 87.0 370.0 113.0 356.0 123.0 M245.0 140.0 C270.0 155.0 300.0 160.0 323.0 150.0 M235.0 80.0 C248.0 61.0 270.0 57.0 288.0 69.0 M260.0 175.0 C280.0 187.0 310.0 190.0 330.0 183.0 " stroke="#38403a" stroke-width="2.4" opacity=".75"/>
 <path d="M173.2 102.6L177.8 102.6M169.9 124.2L174.3 125.6M159.6 142.4L166.0 146.7M164.6 141.9L161.1 147.2M144.2 160.1L148.0 165.0M129.6 170.0L131.3 173.8M133.9 170.4L126.9 173.5M108.5 175.1L109.2 180.7M87.5 175.0L86.7 180.0M90.0 178.0L84.2 177.0M63.5 164.8L59.4 171.9M63.6 169.5L59.4 167.1M48.3 152.5L41.9 158.7M35.5 136.2L29.0 139.6M27.6 118.0L22.8 119.1M25.9 121.6L24.6 115.5M26.3 102.2L20.7 102.2M23.5 104.5L23.5 99.8M32.0 77.8L24.3 75.0M43.1 57.7L36.8 52.8M38.5 57.0L41.4 53.5M55.4 44.7L51.4 39.4M50.9 44.0L55.9 40.1M71.0 36.7L67.6 28.8M89.8 30.1L89.0 24.2M117.1 31.1L118.3 26.3M132.3 38.4L135.9 31.3M131.5 33.5L136.7 36.2M146.9 48.9L152.8 42.2M148.5 44.4L151.2 46.7M161.5 65.5L168.0 61.6M162.9 60.5L166.6 66.7M169.5 85.7L177.3 83.8M172.9 82.6L173.9 86.9" stroke="#454c44" stroke-width="2.6" opacity=".55"/>
 <path d="M377.6 110.8L382.0 111.1M371.5 133.2L377.7 135.5M375.7 131.5L373.5 137.2M363.1 150.9L366.8 153.6M348.8 165.1L352.5 169.7M353.2 165.3L348.1 169.5M324.7 176.9L327.6 185.3M329.5 179.9L322.7 182.3M310.4 182.1L311.2 187.5M282.9 180.2L281.4 186.8M285.1 184.2L279.1 182.8M267.9 175.1L265.1 181.2M268.4 179.0L264.7 177.3M249.9 163.2L245.2 168.7M250.4 168.4L244.7 163.4M232.1 143.8L228.5 145.8M231.5 146.8L229.1 142.7M225.3 120.6L217.8 122.1M222.3 125.0L220.8 117.7M223.9 100.0L216.5 99.5M227.3 79.1L222.3 77.3M223.7 81.3L225.9 75.1M236.6 62.8L230.7 58.8M232.7 62.2L234.5 59.5M252.3 43.8L249.8 40.6M248.6 44.1L253.5 40.3M272.6 33.4L270.5 28.1M289.4 28.6L288.8 23.9M286.4 26.6L291.9 25.9M314.9 30.2L316.2 23.9M312.7 26.5L318.5 27.6M334.2 36.0L336.5 31.5M332.5 32.3L338.3 35.2M352.5 50.9L358.4 44.8M354.4 46.8L356.6 48.9M367.8 67.2L371.5 65.1M368.0 63.2L371.3 69.1M375.0 86.0L379.8 84.8M376.4 81.6L378.4 89.2" stroke="#454c44" stroke-width="2.6" opacity=".55"/>
</g>
<path d="M87.0 83.0 L94.0 80.0 L102.0 81.0 L106.0 86.0 L113.0 93.0 L112.0 105.0 L108.0 113.0 L104.0 116.0 L99.0 111.0 L91.0 108.0 L85.0 101.0 L83.0 92.0Z" fill="none" stroke="#3c443e" stroke-width="3" opacity=".6" filter="url(#bl)"/>
<path d="M276.0 101.0 L284.0 91.0 L292.0 85.0 L298.0 91.0 L305.0 101.0 L310.0 113.0 L302.0 116.0 L290.0 117.0 L282.0 114.0 L277.0 109.0Z" fill="none" stroke="#3c443e" stroke-width="3" opacity=".6" filter="url(#bl)"/>
</g>
</svg><!--/COINS-->
<!--TASK--><div class="a" style="left:0;top:861px;width:1440px;height:39px;background:linear-gradient(#8d99a7,#8692a0)"></div>
<svg class="a" style="left:8px;top:861px" width="39" height="39" viewBox="0 0 39 39">
<defs><radialGradient id="orb" cx="50%" cy="80%" r="60%"><stop offset="0" stop-color="#35c6e0"/><stop offset="0.45" stop-color="#1a6a94"/><stop offset="1" stop-color="#0a2c4c"/></radialGradient>
<linearGradient id="orbhi" x1="0" y1="0" x2="0" y2="1"><stop offset="0" stop-color="#fff" stop-opacity=".95"/><stop offset="1" stop-color="#fff" stop-opacity=".15"/></linearGradient></defs>
<circle cx="19.5" cy="19.5" r="18" fill="url(#orb)" stroke="#0c2038" stroke-width="1.2"/>
<circle cx="19.5" cy="19.5" r="18.8" fill="none" stroke="#c8d4de" stroke-width=".6"/>
<path d="M2.5 19C2.5 8 10 1.8 19.5 1.8S36.5 8 36.5 19C30 16 9 16 2.5 19Z" fill="url(#orbhi)" opacity=".9"/>
<path d="M10 10C13 8 16 9 18 10L16.5 18C14 17 11 17 8.5 18.5Z" fill="#e8632a"/>
<path d="M19.5 10.5C22 12 26 11 29 9L27 18C24 19.5 21 19 18 18Z" fill="#8cc63e"/>
<path d="M8 20C11 18.5 14 18.5 16 19.5L14.5 27.5C12 26.5 9 26.5 6.5 28Z" fill="#2c9be0"/>
<path d="M18 20C21 21 24 21 27 19L25.5 27.5C22.5 29 19.5 29 16.5 28Z" fill="#f6c52c"/>
</svg>
<svg class="a" style="left:58px;top:865px" width="10" height="32" shape-rendering="crispEdges"><rect x="0" y="0" width="2" height="2" fill="#1a1a1a"/><rect x="0" y="4" width="2" height="2" fill="#1a1a1a"/><rect x="0" y="8" width="2" height="2" fill="#1a1a1a"/><rect x="0" y="12" width="2" height="2" fill="#1a1a1a"/><rect x="0" y="16" width="2" height="2" fill="#1a1a1a"/><rect x="0" y="20" width="2" height="2" fill="#1a1a1a"/><rect x="0" y="24" width="2" height="2" fill="#1a1a1a"/><rect x="0" y="28" width="2" height="2" fill="#1a1a1a"/><rect x="4" y="0" width="2" height="2" fill="#1a1a1a"/><rect x="4" y="4" width="2" height="2" fill="#1a1a1a"/><rect x="4" y="8" width="2" height="2" fill="#1a1a1a"/><rect x="4" y="12" width="2" height="2" fill="#1a1a1a"/><rect x="4" y="16" width="2" height="2" fill="#1a1a1a"/><rect x="4" y="20" width="2" height="2" fill="#1a1a1a"/><rect x="4" y="24" width="2" height="2" fill="#1a1a1a"/><rect x="4" y="28" width="2" height="2" fill="#1a1a1a"/><rect x="7" y="0" width="2" height="2" fill="#1a1a1a"/><rect x="7" y="4" width="2" height="2" fill="#1a1a1a"/><rect x="7" y="8" width="2" height="2" fill="#1a1a1a"/><rect x="7" y="12" width="2" height="2" fill="#1a1a1a"/><rect x="7" y="16" width="2" height="2" fill="#1a1a1a"/><rect x="7" y="20" width="2" height="2" fill="#1a1a1a"/><rect x="7" y="24" width="2" height="2" fill="#1a1a1a"/><rect x="7" y="28" width="2" height="2" fill="#1a1a1a"/></svg>
<div class="a" style="left:76px;top:861px;width:159px;height:38px;border:1px solid #1e232b;border-radius:3px;background:linear-gradient(100deg,#b4bcc6 0%,#a3acb7 35%,#97a1ad 36%,#919ba7 100%);box-shadow:inset 0 0 0 1px rgba(255,255,255,.35)"></div>
<div class="a" style="left:237px;top:861px;width:160px;height:38px;border:1px solid #1e232b;border-radius:3px;background:linear-gradient(100deg,#d0d5db 0%,#bfc6ce 35%,#b3bac3 36%,#aab2bc 100%);box-shadow:inset 0 0 0 1px rgba(255,255,255,.35)"></div>
<div class="a" style="left:397px;top:861px;width:160px;height:38px;border:1px solid #1e232b;border-radius:3px;background:linear-gradient(100deg,#b4bcc6 0%,#a3acb7 35%,#97a1ad 36%,#919ba7 100%);box-shadow:inset 0 0 0 1px rgba(255,255,255,.35)"></div>
<svg class="a" style="left:86px;top:865px" width="31" height="31" viewBox="-15.5 -15.5 31 31">
<path d="M0 -15 A15 15 0 0 1 13 -7.5 L0 -7.5 Z" fill="#cf5446"/>
<path d="M0 -15 A15 15 0 0 0 -13 7.5 L-6.5 -3.75 L0 -7.5 Z" fill="#cf5446"/>
<path d="M-13 7.5 A15 15 0 0 1 -13 -7.5 Z" fill="#cf5446"/>
<path d="M-13 -7.5 A15 15 0 0 0 0 15 L6.5 3.75 L-6.5 3.75 Z" fill="#3f9856"/>
<path d="M13 -7.5 A15 15 0 0 1 0 15 L6.5 3.75 L0 -7.5 Z" fill="#e6c04a"/>
<path d="M0 -15 A15 15 0 0 1 13 -7.5 L0 -7.5 L-6.5 3.75 L-13 -7.5 A15 15 0 0 1 0 -15Z" fill="#cf5446"/>
<circle r="7.2" fill="#fff"/><circle r="5.6" fill="#4a86e0"/>
</svg>
<svg class="a" style="left:248px;top:864px" width="31" height="31" viewBox="0 0 31 31">
<path d="M8.5 4.5H22L29.5 12V30.5H8.5Z" fill="#fdfdfd" stroke="#26355a"/><path d="M22 4.5V12H29.5" fill="#d8e2f0" stroke="#26355a"/>
<path d="M12 17H26M12 20H26M12 23H26M12 26H20M20 26H26" stroke="#3a5a9a" stroke-width="1"/>
<rect x="19" y="9" width="4" height="5" fill="#9ab4d8"/>
<rect x="1.5" y="3.5" width="14" height="13" rx="2" fill="#eef3fa" stroke="#1d3a80"/>
<rect x="0.5" y="4.5" width="3" height="11" fill="#1d3a80"/>
<text x="4" y="14" font-family="Liberation Serif" font-style="italic" font-weight="bold" font-size="11" fill="#1d3a80">W</text>
</svg>
<svg class="a" style="left:408px;top:864px" width="31" height="31" viewBox="0 0 31 31">
<path d="M8.5 4.5H22L29.5 12V30.5H8.5Z" fill="#fdfdfd" stroke="#26355a"/><path d="M22 4.5V12H29.5" fill="#d8e2f0" stroke="#26355a"/>
<path d="M12 17H26M12 20H26M12 23H26M12 26H20M20 26H26" stroke="#3a5a9a" stroke-width="1"/>
<rect x="19" y="9" width="4" height="5" fill="#9ab4d8"/>
<rect x="1.5" y="3.5" width="14" height="13" rx="2" fill="#eef3fa" stroke="#1d3a80"/>
<rect x="0.5" y="4.5" width="3" height="11" fill="#1d3a80"/>
<text x="4" y="14" font-family="Liberation Serif" font-style="italic" font-weight="bold" font-size="11" fill="#1d3a80">W</text>
</svg>
<div class="t" style="left:120px;top:873px;font-size:12px;color:#fff;text-shadow:0 0 3px rgba(0,0,0,.35)">Inbox - iulianabal...</div>
<div class="t" style="left:283px;top:873px;font-size:12px;color:#fff;text-shadow:0 0 3px rgba(0,0,0,.35)">Document1 - Mic...</div>
<div class="t" style="left:443px;top:873px;font-size:12px;color:#fff;text-shadow:0 0 3px rgba(0,0,0,.35)">12-Alfonso X.doc...</div>
<svg class="a" style="left:1040px;top:865px" width="10" height="32" shape-rendering="crispEdges"><rect x="0" y="0" width="2" height="2" fill="#1a1a1a"/><rect x="0" y="4" width="2" height="2" fill="#1a1a1a"/><rect x="0" y="8" width="2" height="2" fill="#1a1a1a"/><rect x="0" y="12" width="2" height="2" fill="#1a1a1a"/><rect x="0" y="16" width="2" height="2" fill="#1a1a1a"/><rect x="0" y="20" width="2" height="2" fill="#1a1a1a"/><rect x="0" y="24" width="2" height="2" fill="#1a1a1a"/><rect x="0" y="28" width="2" height="2" fill="#1a1a1a"/><rect x="4" y="0" width="2" height="2" fill="#1a1a1a"/><rect x="4" y="4" width="2" height="2" fill="#1a1a1a"/><rect x="4" y="8" width="2" height="2" fill="#1a1a1a"/><rect x="4" y="12" width="2" height="2" fill="#1a1a1a"/><rect x="4" y="16" width="2" height="2" fill="#1a1a1a"/><rect x="4" y="20" width="2" height="2" fill="#1a1a1a"/><rect x="4" y="24" width="2" height="2" fill="#1a1a1a"/><rect x="4" y="28" width="2" height="2" fill="#1a1a1a"/><rect x="7" y="0" width="2" height="2" fill="#1a1a1a"/><rect x="7" y="4" width="2" height="2" fill="#1a1a1a"/><rect x="7" y="8" width="2" height="2" fill="#1a1a1a"/><rect x="7" y="12" width="2" height="2" fill="#1a1a1a"/><rect x="7" y="16" width="2" height="2" fill="#1a1a1a"/><rect x="7" y="20" width="2" height="2" fill="#1a1a1a"/><rect x="7" y="24" width="2" height="2" fill="#1a1a1a"/><rect x="7" y="28" width="2" height="2" fill="#1a1a1a"/></svg>
<div class="t" style="left:1057px;top:872px;font-size:12px;color:#fff;letter-spacing:-0.5px">RO</div>
<svg class="a" style="left:1078px;top:871px" width="18" height="14" viewBox="0 0 18 14"><path d="M9 5C9 2 12 3 14 1" fill="none" stroke="#e8e8e8" stroke-width="1"/><rect x="1" y="5.5" width="16" height="8" rx="1" fill="#9aa3ad" stroke="#eee"/><path d="M3 8H15M3 10H15M5 12H13" stroke="#eee" stroke-dasharray="1.2 0.8" stroke-width="1"/></svg>
<svg class="a" style="left:1106px;top:877px" width="10" height="6"><path d="M0 6H10L5 0Z" fill="#fff"/></svg>
<div class="a" style="left:1128px;top:873px;width:16px;height:16px;border-radius:2px;background:linear-gradient(#e38a3a,#c05a18);border:1px solid #7a3a10"></div>
<svg class="a" style="left:1130px;top:875px" width="12" height="12"><path d="M6 1C4 3 8 4 6 6M2 8H10M3 10H9M9 7C11 7 11 9 9 9" fill="none" stroke="#fff" stroke-width="1.3"/></svg>
<div class="a" style="left:1158px;top:873px;width:16px;height:16px;border-radius:2px;background:#b32025;border:1px solid #6a1010"></div>
<div class="t" style="left:1161px;top:874px;font-size:13px;font-weight:bold;color:#fff">B</div>
<svg class="a" style="left:1182px;top:873px" width="17" height="16" viewBox="0 0 17 16"><path d="M1 2.5L7.5 1.5V7.5H1ZM8.5 1.3L16 0.3V7.5H8.5ZM1 8.5H7.5V14.5L1 13.5ZM8.5 8.5H16V15.7L8.5 14.7Z" fill="#fff" stroke="#111" stroke-width=".8"/></svg>
<svg class="a" style="left:1204px;top:872px" width="19" height="18" viewBox="0 0 19 18"><rect x="2" y="1" width="5" height="4" fill="#ddd" stroke="#333" stroke-width=".7"/><path d="M1 5H8V11L5.5 13V17H3.5V13L1 11Z" fill="#555" stroke="#222" stroke-width=".7"/><circle cx="13" cy="12" r="5.5" fill="#1e8a2a" stroke="#0a4a10" stroke-width=".7"/><path d="M10.5 12L12.5 14L15.5 9.5" fill="none" stroke="#fff" stroke-width="1.5"/></svg>
<svg class="a" style="left:1230px;top:873px" width="16" height="16" viewBox="0 0 16 16"><circle cx="8" cy="7.5" r="7" fill="#d8c23a" stroke="#8a7a1a" stroke-width=".7"/><circle cx="8" cy="7.5" r="2.5" fill="#eee" stroke="#444" stroke-width=".8"/><path d="M2 12C4 15 12 15 14 12L13 15H3Z" fill="#ddd"/></svg>
<svg class="a" style="left:1254px;top:873px" width="16" height="16" viewBox="0 0 16 16"><circle cx="8" cy="8" r="7" fill="#eceff2" stroke="#7d858f" stroke-width=".8"/><path d="M4 6.5H7M9 6.5H12M5 10.5H11" stroke="#555" stroke-width="1.1"/></svg>
<svg class="a" style="left:1278px;top:872px" width="17" height="18" viewBox="0 0 17 18"><path d="M2 1V17" stroke="#111" stroke-width="1.5"/><path d="M2.5 1.5H9L10 3.5H15V10H9L8 8H2.5Z" fill="#fff" stroke="#111" stroke-width=".8"/><circle cx="12" cy="13" r="4" fill="#d0262a" stroke="#fff" stroke-width=".8"/><path d="M10.2 11.2L13.8 14.8M13.8 11.2L10.2 14.8" stroke="#fff" stroke-width="1.2"/></svg>
<svg class="a" style="left:1302px;top:872px" width="16" height="18" viewBox="0 0 16 18"><path d="M1.5 2.5H9.5V16.5H1.5Z" fill="#fff" stroke="#111" stroke-width="1.3"/><path d="M4 5H12V11C12 13 10 14 8 14C6 14 4 13 4 11Z" fill="#fff" stroke="#111" stroke-width="1.2"/><path d="M6 1V5M10 1V5M8 14V17" stroke="#111" stroke-width="1.4"/></svg>
<svg class="a" style="left:1326px;top:875px" width="17" height="14" viewBox="0 0 17 14"><path d="M1 11H3V13H1ZM4.5 9H6.5V13H4.5ZM8 6H10V13H8ZM11.5 3H13.5V13H11.5ZM15 0.5H16.5V13H15Z" fill="#fff" stroke="#111" stroke-width=".7"/></svg>
<div class="t" style="left:1373px;top:866px;font-size:12px;color:#fff;letter-spacing:-0.2px">20:48</div>
<div class="t" style="left:1359px;top:883px;font-size:12px;color:#fff;letter-spacing:-0.2px">15.03.2016</div>
<div class="a" style="left:1425px;top:862px;width:15px;height:38px;border:1px solid #3a4250;border-right:none;background:linear-gradient(90deg,#9aa4b0,#7b8693)"></div><!--/TASK-->
</body></html>
